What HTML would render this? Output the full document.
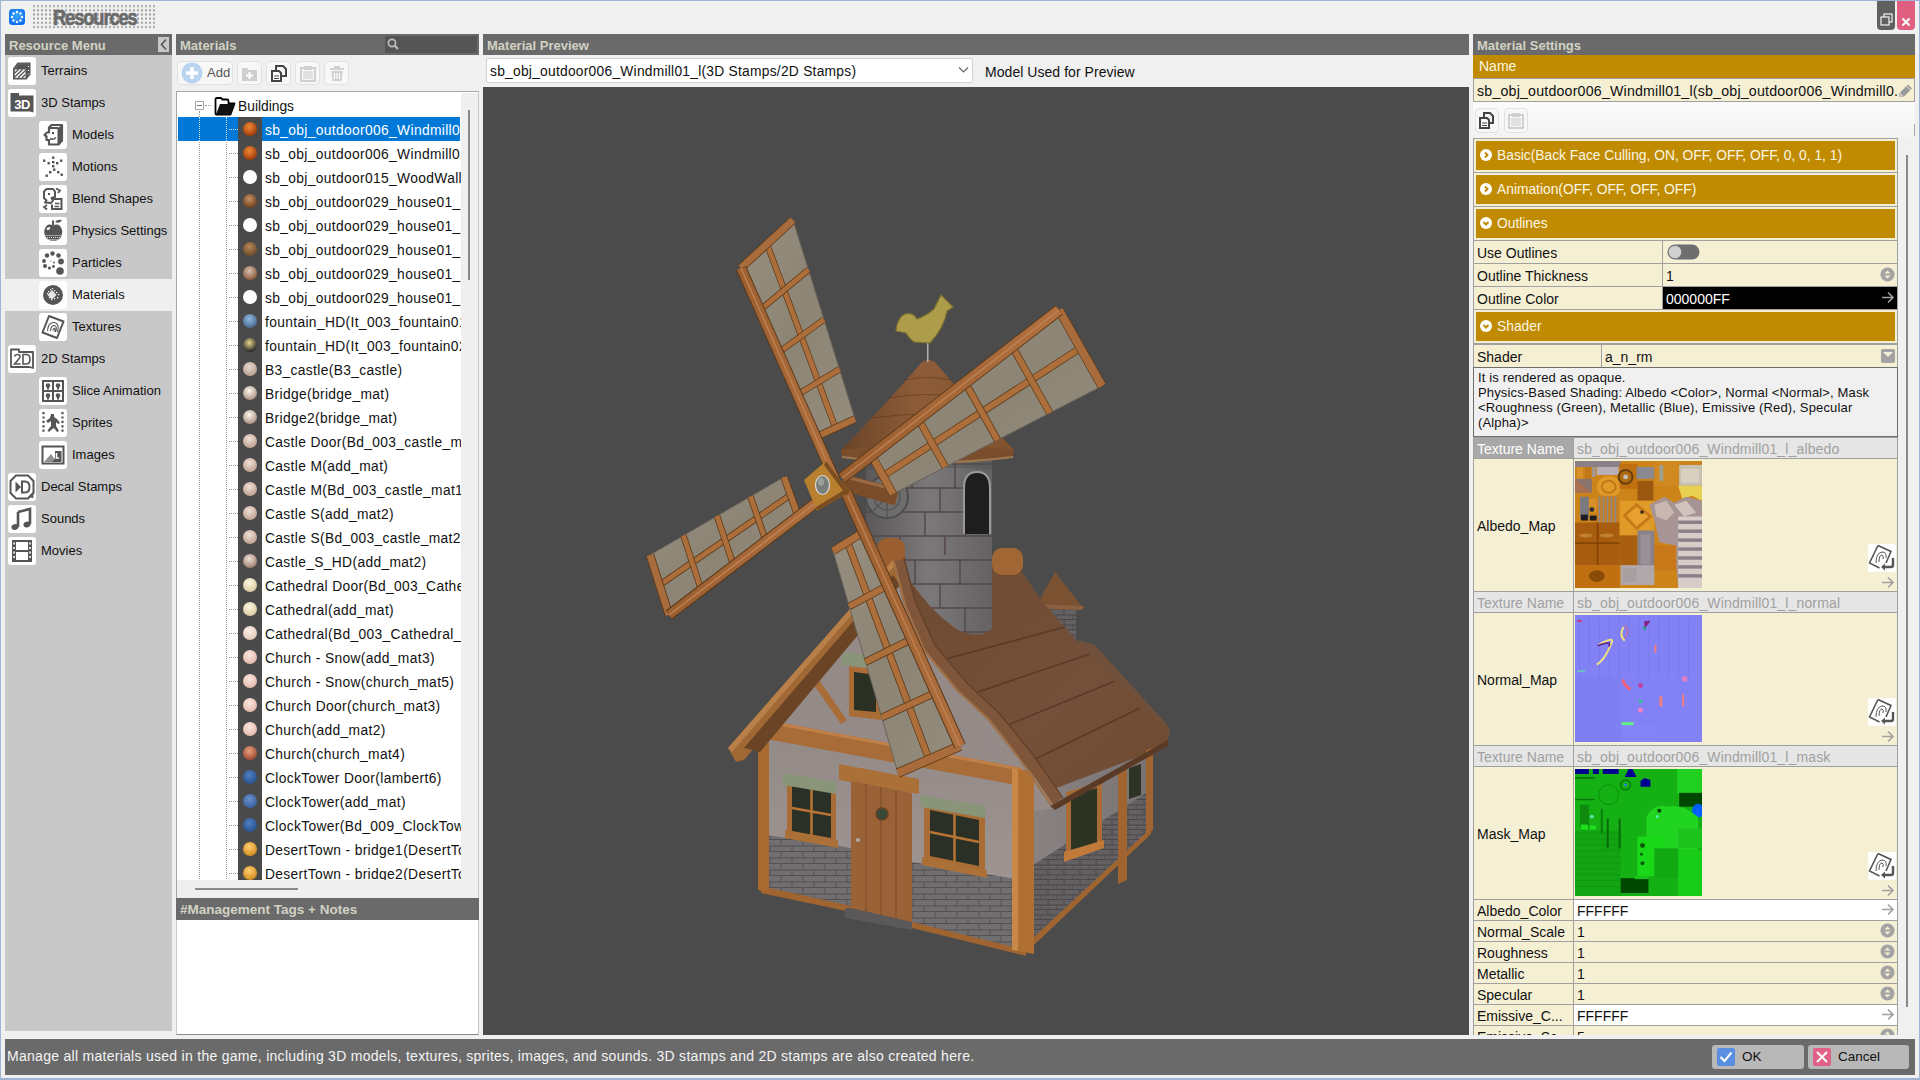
<!DOCTYPE html><html><head><meta charset="utf-8"><style>
*{box-sizing:border-box;margin:0;padding:0}
html,body{width:1920px;height:1080px;overflow:hidden;background:#f0f0f0;font-family:"Liberation Sans", sans-serif;font-size:13px;color:#000}
.a{position:absolute}
.hdr{position:absolute;background:#6a6a6a;color:#d2d2c4;font-weight:bold;font-size:13px;line-height:23px;padding-left:4px;white-space:nowrap}
.t{position:absolute;white-space:nowrap}
</style></head><body>
<div class="a" style="left:0;top:0;width:1920px;height:1080px;border:1px solid #9db4d4;border-width:1px 1px 2px 1px"></div>

<svg class="a" style="left:9px;top:9px" width="16" height="16" viewBox="0 0 16 16">
<defs><radialGradient id="ib" cx="50%" cy="40%" r="60%"><stop offset="0" stop-color="#3aa8ff"/><stop offset="1" stop-color="#0a6ef0"/></radialGradient></defs>
<rect x="0" y="0" width="16" height="16" rx="3.5" fill="url(#ib)"/>
<g fill="#fff"><circle cx="8" cy="3" r="1.2"/><circle cx="11.5" cy="4.5" r="1.2"/><circle cx="13" cy="8" r="1.2"/><circle cx="11.5" cy="11.5" r="1.2"/><circle cx="8" cy="13" r="1.2"/><circle cx="4.5" cy="11.5" r="1.2"/><circle cx="3" cy="8" r="1.2"/><circle cx="4.5" cy="4.5" r="1.2"/></g></svg>
<div class="a" style="left:32px;top:4px;width:125px;height:26px;background-image:radial-gradient(#9a9a9a 0.9px, transparent 1px);background-size:4px 4.2px;background-position:0 0"></div>
<div class="t" style="left:53px;top:3px;font-size:20px;font-weight:bold;color:#6a6a6a;letter-spacing:-1.2px;line-height:28px;transform:scale(0.915,1.08);transform-origin:0 50%;-webkit-text-stroke:0.6px #6a6a6a">Resources</div>
<div class="a" style="left:1877px;top:1px;width:18px;height:29px;background:#606060;border-radius:0 0 4px 4px"></div>
<svg class="a" style="left:1880px;top:13px" width="13" height="13" viewBox="0 0 13 13"><rect x="4" y="1" width="8" height="8" fill="none" stroke="#fff" stroke-width="1.1"/><rect x="1" y="4" width="8" height="8" fill="#606060" stroke="#fff" stroke-width="1.1"/></svg>
<div class="a" style="left:1897px;top:1px;width:18px;height:29px;background:#e05f80;border-radius:0 0 4px 4px"></div>
<svg class="a" style="left:1901px;top:17px" width="10" height="10" viewBox="0 0 10 10"><path d="M1.5 1.5L8.5 8.5M8.5 1.5L1.5 8.5" stroke="#fff" stroke-width="2"/></svg>

<div class="hdr" style="left:5px;top:34px;width:167px;height:21px">Resource Menu</div>
<div class="a" style="left:158px;top:37px;width:11px;height:15px;background:#c8c8c8"></div>
<svg class="a" style="left:158px;top:37px" width="11" height="15"><path d="M8 2.5L3.5 7.5L8 12.5" fill="none" stroke="#555" stroke-width="1.6"/></svg>
<div class="a" style="left:5px;top:55px;width:167px;height:976px;background:#c8c8c8"></div>
<div class="a" style="left:5px;top:279px;width:167px;height:32px;background:#efefef"></div>
<svg class="a" style="left:8px;top:57px" width="28" height="28" viewBox="0 0 28 28"><rect width="28" height="28" rx="3" fill="#fff"/><path d="M5 11.5L9.5 5.5H22.5V17.5L18.5 22.5H5Z" fill="#555"/><path d="M6.8 12.5H17.5V20.8H6.8Z" fill="#fff"/><path d="M6.8 16L10.5 12.5M6.8 20L14.5 12.5M10 20.8L17.5 13.5M14 20.8L17.5 17.5" stroke="#555" stroke-width="1.3"/><path d="M20 10L21 9M20 14L21 13M20 17.5L21 16.5" stroke="#fff" stroke-width="1"/><path d="M7 11.5L10.5 7H21" stroke="#777" stroke-width="0.8" fill="none"/></svg>
<div class="t" style="left:41px;top:62px;line-height:18px;color:#111">Terrains</div>
<svg class="a" style="left:8px;top:89px" width="28" height="28" viewBox="0 0 28 28"><rect width="28" height="28" rx="3" fill="#fff"/><path d="M2.5 4H11V6.5H25.5V23.5L22 22.5H2.5Z" fill="#555"/><text x="14" y="20" font-family="Liberation Sans" font-weight="bold" font-size="13" fill="#fff" text-anchor="middle" letter-spacing="-0.5">3D</text></svg>
<div class="t" style="left:41px;top:94px;line-height:18px;color:#111">3D Stamps</div>
<svg class="a" style="left:39px;top:121px" width="28" height="28" viewBox="0 0 28 28"><rect width="28" height="28" rx="3" fill="#fff"/><path d="M10 6.5L12.5 4H23V19.5L19.5 23.5H10V19H7.5V15.5L5.5 14L8 11.5H10Z" fill="none" stroke="#555" stroke-width="2.2" stroke-linejoin="round"/><path d="M19.5 7V23M10 7H19.5" stroke="#555" stroke-width="2"/><path d="M19.5 6.5L23 4V19.5L19.5 23.5Z" fill="#555"/><rect x="13" y="11" width="2" height="2.2" fill="#555"/><path d="M11 17.5Q14 19.5 17 16.5" fill="none" stroke="#555" stroke-width="1.6"/></svg>
<div class="t" style="left:72px;top:126px;line-height:18px;color:#111">Models</div>
<svg class="a" style="left:39px;top:153px" width="28" height="28" viewBox="0 0 28 28"><rect width="28" height="28" rx="3" fill="#fff"/><g fill="#555"><rect x="4" y="6.5" width="2.4" height="2.4"/><rect x="8.5" y="9" width="2.4" height="2.4"/><rect x="13" y="3.5" width="2.4" height="2.4"/><rect x="13" y="8" width="2.4" height="2.4"/><rect x="17" y="9" width="2.4" height="2.4"/><rect x="21" y="6.5" width="2.4" height="2.4"/><rect x="13" y="12" width="2.4" height="2.4"/><rect x="14" y="15.5" width="2.4" height="2.4"/><rect x="10" y="18" width="2.4" height="2.4"/><rect x="18" y="18" width="2.4" height="2.4"/><rect x="6.5" y="21.5" width="2.4" height="2.4"/><rect x="21.5" y="20.5" width="2.4" height="2.4"/></g></svg>
<div class="t" style="left:72px;top:158px;line-height:18px;color:#111">Motions</div>
<svg class="a" style="left:39px;top:185px" width="28" height="28" viewBox="0 0 28 28"><rect width="28" height="28" rx="3" fill="#fff"/><path d="M5 13V6.5L7.5 4H14L16 6.5V12L12.5 13L14 15.5L12 18L6 17.5L7.5 15.5Z" fill="none" stroke="#555" stroke-width="2" stroke-linejoin="round"/><path d="M14 14H22.5V24H13V19.5" fill="none" stroke="#555" stroke-width="2"/><rect x="9" y="8" width="2" height="2" fill="#555"/><path d="M16 18.5H20.5M15.5 21.5H20" stroke="#555" stroke-width="1.6"/><path d="M17 3.5L21 5.5L19 8M8 20L5 22L8 24.5" fill="none" stroke="#555" stroke-width="1.8"/></svg>
<div class="t" style="left:72px;top:190px;line-height:18px;color:#111">Blend Shapes</div>
<svg class="a" style="left:39px;top:217px" width="28" height="28" viewBox="0 0 28 28"><rect width="28" height="28" rx="3" fill="#fff"/><path d="M14 8.5Q18.5 6.5 21 9Q24.5 13 22.5 19Q20 24.5 14.5 23.5Q9 24.5 6 19Q4 13 7.5 9Q10 6.5 14 8.5Z" fill="#555"/><path d="M14 8.5V3.5" stroke="#555" stroke-width="2"/><path d="M16 5Q18 2 23 3Q21 7 16 5Z" fill="#555"/><ellipse cx="9.5" cy="11.5" rx="2" ry="1.2" fill="#fff" transform="rotate(-35 9.5 11.5)"/><path d="M5.5 18.5H23M6 20.5H22.5M7.5 22.5H21" stroke="#fff" stroke-width="0.9" stroke-dasharray="1 1"/></svg>
<div class="t" style="left:72px;top:222px;line-height:18px;color:#111">Physics Settings</div>
<svg class="a" style="left:39px;top:249px" width="28" height="28" viewBox="0 0 28 28"><rect width="28" height="28" rx="3" fill="#fff"/><g fill="#555"><circle cx="13.5" cy="4.5" r="2.2"/><circle cx="8" cy="6.5" r="2.2"/><circle cx="19.5" cy="6.5" r="2.3"/><circle cx="5" cy="12" r="1.9"/><circle cx="22" cy="12.5" r="2.9"/><circle cx="6" cy="17" r="2"/><circle cx="10.5" cy="19" r="1.6"/><circle cx="14.5" cy="17.5" r="1.4"/><circle cx="21" cy="22" r="3.8"/><circle cx="12" cy="12" r="0.6"/><circle cx="15" cy="13.5" r="0.9"/></g></svg>
<div class="t" style="left:72px;top:254px;line-height:18px;color:#111">Particles</div>
<svg class="a" style="left:39px;top:281px" width="28" height="28" viewBox="0 0 28 28"><rect width="28" height="28" rx="3" fill="#fff"/><circle cx="14" cy="14" r="10" fill="#555"/><g fill="#fff"><rect x="9" y="10" width="1.2" height="1.2"/><rect x="11" y="8" width="1.2" height="1.2"/><rect x="13" y="7" width="1.2" height="1.2"/><rect x="8" y="12" width="1.2" height="1.2"/><rect x="15" y="9" width="1.2" height="1.2"/><rect x="17" y="11" width="1.2" height="1.2"/><rect x="19" y="13" width="1.2" height="1.2"/><rect x="10" y="16" width="1.2" height="1.2"/><rect x="12" y="18" width="1.2" height="1.2"/><rect x="15" y="17" width="1.2" height="1.2"/><rect x="18" y="16" width="1.2" height="1.2"/></g><path d="M8.5 14L13 9L17.5 14L13 18.5Z" fill="#fff" opacity="0.85"/></svg>
<div class="t" style="left:72px;top:286px;line-height:18px;color:#111">Materials</div>
<svg class="a" style="left:39px;top:313px" width="28" height="28" viewBox="0 0 28 28"><rect width="28" height="28" rx="3" fill="#fff"/><path d="M10 3L24.5 8.5L18 25L3.5 19.5Z" fill="none" stroke="#555" stroke-width="2" stroke-linejoin="round"/><path d="M8.5 18Q9 9 15.5 9.5Q21 11 18.5 19M11.5 18Q12 12 15.5 12.5Q18.5 13.5 16.5 19M14 17.5Q14.5 15 15.5 15.5Q16.5 16 15.5 18.5" fill="none" stroke="#555" stroke-width="1.1"/></svg>
<div class="t" style="left:72px;top:318px;line-height:18px;color:#111">Textures</div>
<svg class="a" style="left:8px;top:345px" width="28" height="28" viewBox="0 0 28 28"><rect width="28" height="28" rx="3" fill="#fff"/><path d="M3 4.5H11V7H25V23L21.5 22H3Z" fill="none" stroke="#555" stroke-width="1.8" stroke-linejoin="round"/><path d="M6.5 11.5Q7 9.5 9.5 9.5Q12 9.5 12 11.5Q12 13 6.5 19H12.5M15 9.5H18Q22 9.5 22 14.5Q22 19 18 19H15Z" fill="none" stroke="#555" stroke-width="1.6"/></svg>
<div class="t" style="left:41px;top:350px;line-height:18px;color:#111">2D Stamps</div>
<svg class="a" style="left:39px;top:377px" width="28" height="28" viewBox="0 0 28 28"><rect width="28" height="28" rx="3" fill="#fff"/><rect x="4" y="4" width="20" height="20" fill="none" stroke="#555" stroke-width="2"/><path d="M14 4V24M4 14H24" stroke="#555" stroke-width="2"/><g fill="#555"><circle cx="9" cy="8.5" r="2.3"/><circle cx="19" cy="8.5" r="2.3"/><circle cx="9" cy="18.5" r="2.3"/><circle cx="19" cy="18.5" r="2.3"/><rect x="8" y="10" width="2" height="2.5"/><rect x="18" y="10" width="2" height="2.5"/><rect x="8" y="20" width="2" height="2.5"/><rect x="18" y="20" width="2" height="2.5"/></g></svg>
<div class="t" style="left:72px;top:382px;line-height:18px;color:#111">Slice Animation</div>
<svg class="a" style="left:39px;top:409px" width="28" height="28" viewBox="0 0 28 28"><rect width="28" height="28" rx="3" fill="#fff"/><path d="M4.5 3V25M23.5 3V25" stroke="#555" stroke-width="2.2" stroke-dasharray="2.2 2.2"/><path d="M12 5H15V8L18 10L21 14L19 15L17 13V17L20 22L18 23L15 19L12 21L10 23L8.5 21.5L12 17V12L9 14L7 12L11 9Z" fill="#555"/></svg>
<div class="t" style="left:72px;top:414px;line-height:18px;color:#111">Sprites</div>
<svg class="a" style="left:39px;top:441px" width="28" height="28" viewBox="0 0 28 28"><rect width="28" height="28" rx="3" fill="#fff"/><rect x="3.5" y="5.5" width="21" height="17" fill="none" stroke="#555" stroke-width="2"/><path d="M5 21L12 13L18 21Z" fill="#555" opacity="0.65"/><path d="M16 10H22.5V21H13L16 18Z" fill="#555"/><path d="M17.5 12V17H20" stroke="#fff" stroke-width="1.5" fill="none"/></svg>
<div class="t" style="left:72px;top:446px;line-height:18px;color:#111">Images</div>
<svg class="a" style="left:8px;top:473px" width="28" height="28" viewBox="0 0 28 28"><rect width="28" height="28" rx="3" fill="#fff"/><path d="M8 2.5H20L25.5 8V20L20 25.5H8L2.5 20V8Z" fill="none" stroke="#555" stroke-width="2"/><path d="M7.5 8.5L13 14L7.5 19.5Z" fill="#555"/><path d="M14 8.5H17Q21.5 8.5 21.5 14Q21.5 19.5 17 19.5H14Z" fill="none" stroke="#555" stroke-width="2"/><path d="M20 24L25 19L25.5 25Z" fill="#555"/></svg>
<div class="t" style="left:41px;top:478px;line-height:18px;color:#111">Decal Stamps</div>
<svg class="a" style="left:8px;top:505px" width="28" height="28" viewBox="0 0 28 28"><rect width="28" height="28" rx="3" fill="#fff"/><path d="M10 7L22 4V19" fill="none" stroke="#555" stroke-width="2.6"/><path d="M10 7V22" stroke="#555" stroke-width="2.6"/><ellipse cx="7" cy="22" rx="3.6" ry="2.8" fill="#555" transform="rotate(-20 7 22)"/><ellipse cx="19" cy="19.5" rx="3.6" ry="2.8" fill="#555" transform="rotate(-20 19 19.5)"/></svg>
<div class="t" style="left:41px;top:510px;line-height:18px;color:#111">Sounds</div>
<svg class="a" style="left:8px;top:537px" width="28" height="28" viewBox="0 0 28 28"><rect width="28" height="28" rx="3" fill="#fff"/><rect x="4" y="3" width="4" height="22" fill="#555"/><rect x="20" y="3" width="4" height="22" fill="#555"/><rect x="8" y="3" width="12" height="2" fill="#555"/><rect x="8" y="13" width="12" height="2" fill="#555"/><rect x="8" y="23" width="12" height="2" fill="#555"/><g fill="#fff"><rect x="5.2" y="5.5" width="1.6" height="2"/><rect x="5.2" y="10" width="1.6" height="2"/><rect x="5.2" y="14.5" width="1.6" height="2"/><rect x="5.2" y="19" width="1.6" height="2"/><rect x="21.2" y="5.5" width="1.6" height="2"/><rect x="21.2" y="10" width="1.6" height="2"/><rect x="21.2" y="14.5" width="1.6" height="2"/><rect x="21.2" y="19" width="1.6" height="2"/></g></svg>
<div class="t" style="left:41px;top:542px;line-height:18px;color:#111">Movies</div>
<div class="hdr" style="left:176px;top:34px;width:303px;height:21px">Materials</div>
<div class="a" style="left:385px;top:36px;width:92px;height:17px;background:#555"></div>
<svg class="a" style="left:386px;top:37px" width="14" height="14"><circle cx="6" cy="6" r="3.6" fill="none" stroke="#bbb" stroke-width="1.8"/><path d="M8.5 8.5L12 12" stroke="#bbb" stroke-width="2.2"/></svg>
<div class="a" style="left:177px;top:61px;width:56px;height:24px;background:#f7f7f7;border:1px solid #e2e2e2;border-radius:4px"></div>
<svg class="a" style="left:181px;top:62px" width="22" height="22"><circle cx="11" cy="11" r="10.5" fill="#b9d3f0"/><path d="M11 5V17M5 11H17" stroke="#fff" stroke-width="3.6"/></svg>
<div class="t" style="left:207px;top:64px;line-height:18px;color:#555;font-size:13px">Add</div>
<div class="a" style="left:237px;top:61px;width:25px;height:24px;background:#f7f7f7;border:1px solid #e2e2e2;border-radius:4px"></div>
<div class="a" style="left:266px;top:61px;width:25px;height:24px;background:#f7f7f7;border:1px solid #e2e2e2;border-radius:4px"></div>
<div class="a" style="left:295px;top:61px;width:25px;height:24px;background:#f7f7f7;border:1px solid #e2e2e2;border-radius:4px"></div>
<div class="a" style="left:324px;top:61px;width:25px;height:24px;background:#f7f7f7;border:1px solid #e2e2e2;border-radius:4px"></div>
<svg class="a" style="left:238px;top:62px" width="24" height="22"><path d="M4 6H9L11 8H19V19H4Z" fill="#cfcfcf"/><path d="M11.5 10V17M8 13.5H15" stroke="#fff" stroke-width="2"/></svg>
<svg class="a" style="left:267px;top:62px" width="24" height="22"><path d="M9 4H16L19 7V14H9Z" fill="none" stroke="#444" stroke-width="2"/><path d="M5 9H12L14 11V19H5Z" fill="#fff" stroke="#444" stroke-width="2"/><path d="M7 14H12M7 16.5H12" stroke="#444" stroke-width="1.2"/></svg>
<svg class="a" style="left:296px;top:62px" width="24" height="22"><rect x="5" y="6" width="14" height="13" fill="none" stroke="#d0d0d0" stroke-width="2"/><rect x="8" y="4" width="8" height="4" fill="#d0d0d0"/><rect x="7" y="9" width="10" height="8" fill="#e0e0e0"/></svg>
<svg class="a" style="left:325px;top:62px" width="24" height="22"><path d="M5 7H19M10 7V5H14V7" stroke="#d0d0d0" stroke-width="2" fill="none"/><path d="M6.5 9H17.5L16.5 19H7.5Z" fill="#d0d0d0"/><path d="M9.5 11V17M12 11V17M14.5 11V17" stroke="#fff" stroke-width="1.2"/></svg>
<div class="a" style="left:176px;top:91px;width:303px;height:807px;background:#fff;border:1px solid #a6a6a6;border-bottom:none;border-right-color:#c8c8c8"></div>
<div class="a" style="left:461px;top:93px;width:17px;height:787px;background:#efefef"></div>
<div class="a" style="left:468px;top:110px;width:2px;height:170px;background:#8a8a8a"></div>
<div class="a" style="left:177px;top:880px;width:301px;height:18px;background:#efefef"></div>
<div class="a" style="left:195px;top:888px;width:103px;height:2px;background:#8a8a8a"></div>
<div class="a" style="left:177px;top:92px;width:284px;height:788px;overflow:hidden">
<div class="a" style="left:18px;top:9px;width:9px;height:9px;border:1px solid #a8a8a8;background:#fff"></div>
<div class="a" style="left:20px;top:13px;width:5px;height:1px;background:#777"></div>
<div class="a" style="left:28px;top:13px;width:6px;height:1px;border-top:1px dotted #999"></div>
<div class="a" style="left:22px;top:19px;width:1px;height:780px;border-left:1px dotted #999"></div>
<div class="a" style="left:49px;top:25px;width:1px;height:780px;border-left:1px dotted #999"></div>
<svg class="a" style="left:37px;top:5px" width="22" height="19" viewBox="0 0 22 19"><path d="M1.5 2.5Q1.5 1 3 1H7L8.5 2.5H13Q14.5 2.5 14.5 4V6.5H20.5L16.5 17.5H2.5Q1.5 17.5 1.5 16.5Z" fill="#fff" stroke="#000" stroke-width="1.8" stroke-linejoin="round"/><path d="M6 7H21L17 17.5H2Z" fill="#111"/></svg>
<div class="t" style="left:61px;top:6px;line-height:18px;font-size:13.8px;color:#111">Buildings</div>
<div class="a" style="left:1px;top:25px;width:282px;height:24px;background:#0078d7"></div>
<div class="a" style="left:61px;top:25px;width:24px;height:800px;background:#4a4a4a"></div>
<div class="a" style="left:22px;top:25px;width:1px;height:24px;border-left:1px dotted #d8e8f8"></div>
<div class="a" style="left:49px;top:25px;width:1px;height:24px;border-left:1px dotted #d8e8f8"></div>
<svg class="a" style="left:0;top:0" width="1" height="1"><defs><radialGradient id="sp0" cx="45%" cy="35%" r="65%"><stop offset="0" stop-color="#f08a3a"/><stop offset="1" stop-color="#a03a08"/></radialGradient><radialGradient id="sp1" cx="45%" cy="35%" r="65%"><stop offset="0" stop-color="#f08a3a"/><stop offset="1" stop-color="#a03a08"/></radialGradient><radialGradient id="sp2" cx="45%" cy="35%" r="65%"><stop offset="0" stop-color="#fff"/><stop offset="1" stop-color="#fff"/></radialGradient><radialGradient id="sp3" cx="45%" cy="35%" r="65%"><stop offset="0" stop-color="#c89060"/><stop offset="1" stop-color="#6a4020"/></radialGradient><radialGradient id="sp4" cx="45%" cy="35%" r="65%"><stop offset="0" stop-color="#fff"/><stop offset="1" stop-color="#fff"/></radialGradient><radialGradient id="sp5" cx="45%" cy="35%" r="65%"><stop offset="0" stop-color="#b88858"/><stop offset="1" stop-color="#6a4a2a"/></radialGradient><radialGradient id="sp6" cx="45%" cy="35%" r="65%"><stop offset="0" stop-color="#d8c0b0"/><stop offset="1" stop-color="#8a5a3a"/></radialGradient><radialGradient id="sp7" cx="45%" cy="35%" r="65%"><stop offset="0" stop-color="#fff"/><stop offset="1" stop-color="#fff"/></radialGradient><radialGradient id="sp8" cx="45%" cy="35%" r="65%"><stop offset="0" stop-color="#90b8e0"/><stop offset="1" stop-color="#4a6a90"/></radialGradient><radialGradient id="sp9" cx="45%" cy="35%" r="65%"><stop offset="0" stop-color="#e8d890"/><stop offset="1" stop-color="#202020"/></radialGradient><radialGradient id="sp10" cx="45%" cy="35%" r="65%"><stop offset="0" stop-color="#e8d8d0"/><stop offset="1" stop-color="#b8a090"/></radialGradient><radialGradient id="sp11" cx="45%" cy="35%" r="65%"><stop offset="0" stop-color="#fff8f0"/><stop offset="1" stop-color="#a89080"/></radialGradient><radialGradient id="sp12" cx="45%" cy="35%" r="65%"><stop offset="0" stop-color="#fff8f0"/><stop offset="1" stop-color="#a89080"/></radialGradient><radialGradient id="sp13" cx="45%" cy="35%" r="65%"><stop offset="0" stop-color="#f0e0d8"/><stop offset="1" stop-color="#c0a090"/></radialGradient><radialGradient id="sp14" cx="45%" cy="35%" r="65%"><stop offset="0" stop-color="#f0e0d8"/><stop offset="1" stop-color="#c0a090"/></radialGradient><radialGradient id="sp15" cx="45%" cy="35%" r="65%"><stop offset="0" stop-color="#f0e0d8"/><stop offset="1" stop-color="#c0a090"/></radialGradient><radialGradient id="sp16" cx="45%" cy="35%" r="65%"><stop offset="0" stop-color="#f0e0d8"/><stop offset="1" stop-color="#c0a090"/></radialGradient><radialGradient id="sp17" cx="45%" cy="35%" r="65%"><stop offset="0" stop-color="#f0e0d8"/><stop offset="1" stop-color="#c0a090"/></radialGradient><radialGradient id="sp18" cx="45%" cy="35%" r="65%"><stop offset="0" stop-color="#f0e0d8"/><stop offset="1" stop-color="#a08070"/></radialGradient><radialGradient id="sp19" cx="45%" cy="35%" r="65%"><stop offset="0" stop-color="#fff8e0"/><stop offset="1" stop-color="#d8c8a0"/></radialGradient><radialGradient id="sp20" cx="45%" cy="35%" r="65%"><stop offset="0" stop-color="#fff8e0"/><stop offset="1" stop-color="#d8c8a0"/></radialGradient><radialGradient id="sp21" cx="45%" cy="35%" r="65%"><stop offset="0" stop-color="#fff0e8"/><stop offset="1" stop-color="#e0c8b8"/></radialGradient><radialGradient id="sp22" cx="45%" cy="35%" r="65%"><stop offset="0" stop-color="#fde8e0"/><stop offset="1" stop-color="#e0b8a8"/></radialGradient><radialGradient id="sp23" cx="45%" cy="35%" r="65%"><stop offset="0" stop-color="#fde8e0"/><stop offset="1" stop-color="#e0b8a8"/></radialGradient><radialGradient id="sp24" cx="45%" cy="35%" r="65%"><stop offset="0" stop-color="#fde8e0"/><stop offset="1" stop-color="#e0b8a8"/></radialGradient><radialGradient id="sp25" cx="45%" cy="35%" r="65%"><stop offset="0" stop-color="#fde8e0"/><stop offset="1" stop-color="#e0b8a8"/></radialGradient><radialGradient id="sp26" cx="45%" cy="35%" r="65%"><stop offset="0" stop-color="#e8a080"/><stop offset="1" stop-color="#a04830"/></radialGradient><radialGradient id="sp27" cx="45%" cy="35%" r="65%"><stop offset="0" stop-color="#5080c0"/><stop offset="1" stop-color="#2a5090"/></radialGradient><radialGradient id="sp28" cx="45%" cy="35%" r="65%"><stop offset="0" stop-color="#6a90c8"/><stop offset="1" stop-color="#3a60a0"/></radialGradient><radialGradient id="sp29" cx="45%" cy="35%" r="65%"><stop offset="0" stop-color="#5080c0"/><stop offset="1" stop-color="#2a5090"/></radialGradient><radialGradient id="sp30" cx="45%" cy="35%" r="65%"><stop offset="0" stop-color="#ffd070"/><stop offset="1" stop-color="#d08a20"/></radialGradient><radialGradient id="sp31" cx="45%" cy="35%" r="65%"><stop offset="0" stop-color="#ffd070"/><stop offset="1" stop-color="#d08a20"/></radialGradient></defs></svg>
<div class="a" style="left:52px;top:37px;width:9px;height:1px;border-top:1px dotted #d8e8f8"></div>
<svg class="a" style="left:66px;top:30px" width="14" height="14"><circle cx="7" cy="7" r="7" fill="url(#sp0)"/></svg>
<div class="t" style="left:88px;top:30px;line-height:18px;font-size:13.8px;letter-spacing:0.35px;color:#fff">sb_obj_outdoor006_Windmill01_l</div>
<div class="a" style="left:52px;top:61px;width:9px;height:1px;border-top:1px dotted #999"></div>
<svg class="a" style="left:66px;top:54px" width="14" height="14"><circle cx="7" cy="7" r="7" fill="url(#sp1)"/></svg>
<div class="t" style="left:88px;top:54px;line-height:18px;font-size:13.8px;letter-spacing:0.35px;color:#111">sb_obj_outdoor006_Windmill01_l</div>
<div class="a" style="left:52px;top:85px;width:9px;height:1px;border-top:1px dotted #999"></div>
<svg class="a" style="left:66px;top:78px" width="14" height="14"><circle cx="7" cy="7" r="7" fill="url(#sp2)"/></svg>
<div class="t" style="left:88px;top:78px;line-height:18px;font-size:13.8px;letter-spacing:0.35px;color:#111">sb_obj_outdoor015_WoodWall01</div>
<div class="a" style="left:52px;top:109px;width:9px;height:1px;border-top:1px dotted #999"></div>
<svg class="a" style="left:66px;top:102px" width="14" height="14"><circle cx="7" cy="7" r="7" fill="url(#sp3)"/></svg>
<div class="t" style="left:88px;top:102px;line-height:18px;font-size:13.8px;letter-spacing:0.35px;color:#111">sb_obj_outdoor029_house01_l</div>
<div class="a" style="left:52px;top:133px;width:9px;height:1px;border-top:1px dotted #999"></div>
<svg class="a" style="left:66px;top:126px" width="14" height="14"><circle cx="7" cy="7" r="7" fill="url(#sp4)"/></svg>
<div class="t" style="left:88px;top:126px;line-height:18px;font-size:13.8px;letter-spacing:0.35px;color:#111">sb_obj_outdoor029_house01_l</div>
<div class="a" style="left:52px;top:157px;width:9px;height:1px;border-top:1px dotted #999"></div>
<svg class="a" style="left:66px;top:150px" width="14" height="14"><circle cx="7" cy="7" r="7" fill="url(#sp5)"/></svg>
<div class="t" style="left:88px;top:150px;line-height:18px;font-size:13.8px;letter-spacing:0.35px;color:#111">sb_obj_outdoor029_house01_l</div>
<div class="a" style="left:52px;top:181px;width:9px;height:1px;border-top:1px dotted #999"></div>
<svg class="a" style="left:66px;top:174px" width="14" height="14"><circle cx="7" cy="7" r="7" fill="url(#sp6)"/></svg>
<div class="t" style="left:88px;top:174px;line-height:18px;font-size:13.8px;letter-spacing:0.35px;color:#111">sb_obj_outdoor029_house01_l</div>
<div class="a" style="left:52px;top:205px;width:9px;height:1px;border-top:1px dotted #999"></div>
<svg class="a" style="left:66px;top:198px" width="14" height="14"><circle cx="7" cy="7" r="7" fill="url(#sp7)"/></svg>
<div class="t" style="left:88px;top:198px;line-height:18px;font-size:13.8px;letter-spacing:0.35px;color:#111">sb_obj_outdoor029_house01_l</div>
<div class="a" style="left:52px;top:229px;width:9px;height:1px;border-top:1px dotted #999"></div>
<svg class="a" style="left:66px;top:222px" width="14" height="14"><circle cx="7" cy="7" r="7" fill="url(#sp8)"/></svg>
<div class="t" style="left:88px;top:222px;line-height:18px;font-size:13.8px;letter-spacing:0.35px;color:#111">fountain_HD(It_003_fountain01)</div>
<div class="a" style="left:52px;top:253px;width:9px;height:1px;border-top:1px dotted #999"></div>
<svg class="a" style="left:66px;top:246px" width="14" height="14"><circle cx="7" cy="7" r="7" fill="url(#sp9)"/></svg>
<div class="t" style="left:88px;top:246px;line-height:18px;font-size:13.8px;letter-spacing:0.35px;color:#111">fountain_HD(It_003_fountain02)</div>
<div class="a" style="left:52px;top:277px;width:9px;height:1px;border-top:1px dotted #999"></div>
<svg class="a" style="left:66px;top:270px" width="14" height="14"><circle cx="7" cy="7" r="7" fill="url(#sp10)"/></svg>
<div class="t" style="left:88px;top:270px;line-height:18px;font-size:13.8px;letter-spacing:0.35px;color:#111">B3_castle(B3_castle)</div>
<div class="a" style="left:52px;top:301px;width:9px;height:1px;border-top:1px dotted #999"></div>
<svg class="a" style="left:66px;top:294px" width="14" height="14"><circle cx="7" cy="7" r="7" fill="url(#sp11)"/></svg>
<div class="t" style="left:88px;top:294px;line-height:18px;font-size:13.8px;letter-spacing:0.35px;color:#111">Bridge(bridge_mat)</div>
<div class="a" style="left:52px;top:325px;width:9px;height:1px;border-top:1px dotted #999"></div>
<svg class="a" style="left:66px;top:318px" width="14" height="14"><circle cx="7" cy="7" r="7" fill="url(#sp12)"/></svg>
<div class="t" style="left:88px;top:318px;line-height:18px;font-size:13.8px;letter-spacing:0.35px;color:#111">Bridge2(bridge_mat)</div>
<div class="a" style="left:52px;top:349px;width:9px;height:1px;border-top:1px dotted #999"></div>
<svg class="a" style="left:66px;top:342px" width="14" height="14"><circle cx="7" cy="7" r="7" fill="url(#sp13)"/></svg>
<div class="t" style="left:88px;top:342px;line-height:18px;font-size:13.8px;letter-spacing:0.35px;color:#111">Castle Door(Bd_003_castle_mat)</div>
<div class="a" style="left:52px;top:373px;width:9px;height:1px;border-top:1px dotted #999"></div>
<svg class="a" style="left:66px;top:366px" width="14" height="14"><circle cx="7" cy="7" r="7" fill="url(#sp14)"/></svg>
<div class="t" style="left:88px;top:366px;line-height:18px;font-size:13.8px;letter-spacing:0.35px;color:#111">Castle M(add_mat)</div>
<div class="a" style="left:52px;top:397px;width:9px;height:1px;border-top:1px dotted #999"></div>
<svg class="a" style="left:66px;top:390px" width="14" height="14"><circle cx="7" cy="7" r="7" fill="url(#sp15)"/></svg>
<div class="t" style="left:88px;top:390px;line-height:18px;font-size:13.8px;letter-spacing:0.35px;color:#111">Castle M(Bd_003_castle_mat1)</div>
<div class="a" style="left:52px;top:421px;width:9px;height:1px;border-top:1px dotted #999"></div>
<svg class="a" style="left:66px;top:414px" width="14" height="14"><circle cx="7" cy="7" r="7" fill="url(#sp16)"/></svg>
<div class="t" style="left:88px;top:414px;line-height:18px;font-size:13.8px;letter-spacing:0.35px;color:#111">Castle S(add_mat2)</div>
<div class="a" style="left:52px;top:445px;width:9px;height:1px;border-top:1px dotted #999"></div>
<svg class="a" style="left:66px;top:438px" width="14" height="14"><circle cx="7" cy="7" r="7" fill="url(#sp17)"/></svg>
<div class="t" style="left:88px;top:438px;line-height:18px;font-size:13.8px;letter-spacing:0.35px;color:#111">Castle S(Bd_003_castle_mat2)</div>
<div class="a" style="left:52px;top:469px;width:9px;height:1px;border-top:1px dotted #999"></div>
<svg class="a" style="left:66px;top:462px" width="14" height="14"><circle cx="7" cy="7" r="7" fill="url(#sp18)"/></svg>
<div class="t" style="left:88px;top:462px;line-height:18px;font-size:13.8px;letter-spacing:0.35px;color:#111">Castle_S_HD(add_mat2)</div>
<div class="a" style="left:52px;top:493px;width:9px;height:1px;border-top:1px dotted #999"></div>
<svg class="a" style="left:66px;top:486px" width="14" height="14"><circle cx="7" cy="7" r="7" fill="url(#sp19)"/></svg>
<div class="t" style="left:88px;top:486px;line-height:18px;font-size:13.8px;letter-spacing:0.35px;color:#111">Cathedral Door(Bd_003_Cathedral)</div>
<div class="a" style="left:52px;top:517px;width:9px;height:1px;border-top:1px dotted #999"></div>
<svg class="a" style="left:66px;top:510px" width="14" height="14"><circle cx="7" cy="7" r="7" fill="url(#sp20)"/></svg>
<div class="t" style="left:88px;top:510px;line-height:18px;font-size:13.8px;letter-spacing:0.35px;color:#111">Cathedral(add_mat)</div>
<div class="a" style="left:52px;top:541px;width:9px;height:1px;border-top:1px dotted #999"></div>
<svg class="a" style="left:66px;top:534px" width="14" height="14"><circle cx="7" cy="7" r="7" fill="url(#sp21)"/></svg>
<div class="t" style="left:88px;top:534px;line-height:18px;font-size:13.8px;letter-spacing:0.35px;color:#111">Cathedral(Bd_003_Cathedral_mat)</div>
<div class="a" style="left:52px;top:565px;width:9px;height:1px;border-top:1px dotted #999"></div>
<svg class="a" style="left:66px;top:558px" width="14" height="14"><circle cx="7" cy="7" r="7" fill="url(#sp22)"/></svg>
<div class="t" style="left:88px;top:558px;line-height:18px;font-size:13.8px;letter-spacing:0.35px;color:#111">Church - Snow(add_mat3)</div>
<div class="a" style="left:52px;top:589px;width:9px;height:1px;border-top:1px dotted #999"></div>
<svg class="a" style="left:66px;top:582px" width="14" height="14"><circle cx="7" cy="7" r="7" fill="url(#sp23)"/></svg>
<div class="t" style="left:88px;top:582px;line-height:18px;font-size:13.8px;letter-spacing:0.35px;color:#111">Church - Snow(church_mat5)</div>
<div class="a" style="left:52px;top:613px;width:9px;height:1px;border-top:1px dotted #999"></div>
<svg class="a" style="left:66px;top:606px" width="14" height="14"><circle cx="7" cy="7" r="7" fill="url(#sp24)"/></svg>
<div class="t" style="left:88px;top:606px;line-height:18px;font-size:13.8px;letter-spacing:0.35px;color:#111">Church Door(church_mat3)</div>
<div class="a" style="left:52px;top:637px;width:9px;height:1px;border-top:1px dotted #999"></div>
<svg class="a" style="left:66px;top:630px" width="14" height="14"><circle cx="7" cy="7" r="7" fill="url(#sp25)"/></svg>
<div class="t" style="left:88px;top:630px;line-height:18px;font-size:13.8px;letter-spacing:0.35px;color:#111">Church(add_mat2)</div>
<div class="a" style="left:52px;top:661px;width:9px;height:1px;border-top:1px dotted #999"></div>
<svg class="a" style="left:66px;top:654px" width="14" height="14"><circle cx="7" cy="7" r="7" fill="url(#sp26)"/></svg>
<div class="t" style="left:88px;top:654px;line-height:18px;font-size:13.8px;letter-spacing:0.35px;color:#111">Church(church_mat4)</div>
<div class="a" style="left:52px;top:685px;width:9px;height:1px;border-top:1px dotted #999"></div>
<svg class="a" style="left:66px;top:678px" width="14" height="14"><circle cx="7" cy="7" r="7" fill="url(#sp27)"/></svg>
<div class="t" style="left:88px;top:678px;line-height:18px;font-size:13.8px;letter-spacing:0.35px;color:#111">ClockTower Door(lambert6)</div>
<div class="a" style="left:52px;top:709px;width:9px;height:1px;border-top:1px dotted #999"></div>
<svg class="a" style="left:66px;top:702px" width="14" height="14"><circle cx="7" cy="7" r="7" fill="url(#sp28)"/></svg>
<div class="t" style="left:88px;top:702px;line-height:18px;font-size:13.8px;letter-spacing:0.35px;color:#111">ClockTower(add_mat)</div>
<div class="a" style="left:52px;top:733px;width:9px;height:1px;border-top:1px dotted #999"></div>
<svg class="a" style="left:66px;top:726px" width="14" height="14"><circle cx="7" cy="7" r="7" fill="url(#sp29)"/></svg>
<div class="t" style="left:88px;top:726px;line-height:18px;font-size:13.8px;letter-spacing:0.35px;color:#111">ClockTower(Bd_009_ClockTower)</div>
<div class="a" style="left:52px;top:757px;width:9px;height:1px;border-top:1px dotted #999"></div>
<svg class="a" style="left:66px;top:750px" width="14" height="14"><circle cx="7" cy="7" r="7" fill="url(#sp30)"/></svg>
<div class="t" style="left:88px;top:750px;line-height:18px;font-size:13.8px;letter-spacing:0.35px;color:#111">DesertTown - bridge1(DesertTown)</div>
<div class="a" style="left:52px;top:781px;width:9px;height:1px;border-top:1px dotted #999"></div>
<svg class="a" style="left:66px;top:774px" width="14" height="14"><circle cx="7" cy="7" r="7" fill="url(#sp31)"/></svg>
<div class="t" style="left:88px;top:774px;line-height:18px;font-size:13.8px;letter-spacing:0.35px;color:#111">DesertTown - bridge2(DesertTown)</div>
</div>
<div class="a" style="left:177px;top:893px;width:0;height:0"></div>
<div class="hdr" style="left:176px;top:898px;width:303px;height:22px;line-height:23px;font-size:13.5px">#Management Tags + Notes</div>
<div class="a" style="left:176px;top:920px;width:303px;height:115px;background:#fff;border:1px solid #c8c8c8;border-top:none;border-bottom-color:#8a8a8a"></div>
<div class="hdr" style="left:483px;top:34px;width:986px;height:21px">Material Preview</div>
<div class="a" style="left:486px;top:58px;width:487px;height:25px;background:#fff;border:1px solid #d0d0d0;border-radius:2px"></div>
<div class="t" style="left:490px;top:63px;line-height:18px;font-size:13.8px;letter-spacing:0.25px;color:#111">sb_obj_outdoor006_Windmill01_l(3D Stamps/2D Stamps)</div>
<svg class="a" style="left:958px;top:66px" width="11" height="8"><path d="M1 1.5L5.5 6L10 1.5" fill="none" stroke="#666" stroke-width="1.2"/></svg>
<div class="t" style="left:985px;top:63px;line-height:18px;font-size:14px;letter-spacing:0.05px;color:#111">Model Used for Preview</div>
<div class="a" style="left:483px;top:87px;width:986px;height:948px;background:#4b4b4b"></div>
<svg class="a" style="left:0;top:0" width="1920" height="1080" viewBox="0 0 1920 1080"><defs>
<linearGradient id="cloth" x1="0" y1="0" x2="1" y2="1"><stop offset="0" stop-color="#968e7e"/><stop offset="0.5" stop-color="#8c8474"/><stop offset="1" stop-color="#948c7c"/></linearGradient>
<linearGradient id="wood" x1="0" y1="0" x2="1" y2="0"><stop offset="0" stop-color="#9a5e30"/><stop offset="1" stop-color="#b07040"/></linearGradient>
<linearGradient id="roofg" x1="0" y1="0" x2="1" y2="1"><stop offset="0" stop-color="#6e4a30"/><stop offset="0.6" stop-color="#74503a"/><stop offset="1" stop-color="#6e4a30"/></linearGradient>
<linearGradient id="coneg" x1="0" y1="0" x2="1" y2="0"><stop offset="0" stop-color="#6a4428"/><stop offset="0.45" stop-color="#8e5c38"/><stop offset="1" stop-color="#80522e"/></linearGradient>
<linearGradient id="towerg" x1="0" y1="0" x2="1" y2="0"><stop offset="0" stop-color="#5a5858"/><stop offset="0.5" stop-color="#7a7878"/><stop offset="1" stop-color="#646262"/></linearGradient>
<linearGradient id="plaster" x1="0" y1="0" x2="0" y2="1"><stop offset="0" stop-color="#948a88"/><stop offset="1" stop-color="#a29896"/></linearGradient>
<linearGradient id="sidew" x1="0" y1="0" x2="1" y2="0"><stop offset="0" stop-color="#8a8282"/><stop offset="1" stop-color="#787272"/></linearGradient>
<pattern id="brick" width="22" height="12" patternUnits="userSpaceOnUse"><rect width="22" height="12" fill="#706e70"/><path d="M0 11.5H22M11 0V6M0 6H22M0 6V12M22 6V12" stroke="#545052" stroke-width="1"/></pattern>
<pattern id="brickS" width="16" height="10" patternUnits="userSpaceOnUse"><rect width="16" height="10" fill="#626062"/><path d="M0 9.5H16M8 0V5M0 5H16M0 5V10" stroke="#4a4648" stroke-width="1"/></pattern>
<pattern id="towerbrick" width="40" height="25" patternUnits="userSpaceOnUse"><rect width="40" height="25" fill="url(#towerg)"/><path d="M0 24.5H40M20 0V12.5M0 12.5H40M5 12.5V25M35 12.5V25" stroke="#54484a" stroke-width="1.2"/></pattern>
</defs><polygon points="1041.0,607.0 1076.0,607.0 1076.0,650.0 1041.0,650.0" fill="url(#brickS)"/><polygon points="1055.0,572.0 1083.0,608.0 1036.0,606.0" fill="#7a5232"/><polygon points="1034.0,604.0 1084.0,606.0 1082.0,610.0 1036.0,609.0" fill="#8a6040"/><polygon points="1077.0,640.0 1095.0,645.0 1170.0,728.0 1168.0,740.0 1152.0,745.0" fill="#70503a"/><rect x="866" y="452" width="126" height="190" fill="url(#towerg)"/><path d="M866 464H992M866 488H992M866 512H992M866 536H992M866 560H992M866 584H992M866 608H992M866 632H992" stroke="#54484a" stroke-width="1.6"/><path d="M912 464V488M955 464V488M890 488V512M940 488V512M925 512V536M965 512V536M900 536V560M945 536V560M915 560V584M960 560V584M895 584V608M940 584V608M920 608V632M965 608V632" stroke="#54484a" stroke-width="1.5"/><path d="M866 452H992V470Q930 465 866 470Z" fill="#505050" opacity="0.4"/><path d="M964 534V488Q964 472 977 472Q990 472 990 488V534Z" fill="#1e1e1e"/><path d="M964 534V488Q964 472 977 472Q990 472 990 488V534" fill="none" stroke="#9a9a9a" stroke-width="2"/><circle cx="887" cy="497" r="21" fill="#6e6c6c" stroke="#4e4c4c" stroke-width="2"/><path d="M887 497L866 497M887 497L872 482M887 497L887 476M887 497L902 482M887 497L872 512M887 497L887 518" stroke="#555" stroke-width="1.5"/><circle cx="887" cy="497" r="13" fill="none" stroke="#555" stroke-width="1.5"/><polygon points="893.0,560.0 1022.0,572.0 1041.0,600.0 1076.0,640.0 1168.0,728.0 1168.0,742.0 1052.0,806.0 1020.0,758.0 989.0,719.0 958.0,690.0 925.0,650.0 906.0,605.0" fill="url(#roofg)"/><line x1="942.0" y1="660.0" x2="1065.0" y2="627.0" stroke="#4e3220" stroke-width="1.5" opacity="0.7"/><line x1="969.0" y1="695.0" x2="1090.0" y2="654.0" stroke="#4e3220" stroke-width="1.5" opacity="0.7"/><line x1="996.0" y1="730.0" x2="1115.0" y2="681.0" stroke="#4e3220" stroke-width="1.5" opacity="0.7"/><line x1="1023.0" y1="765.0" x2="1140.0" y2="708.0" stroke="#4e3220" stroke-width="1.5" opacity="0.7"/><defs><clipPath id="tocc"><path d="M866 555H992V628Q982 640 958 630Q928 610 903 570L866 568Z"/></clipPath></defs><g clip-path="url(#tocc)"><rect x="866" y="452" width="126" height="190" fill="url(#towerg)"/><path d="M866 560H992M866 584H992M866 608H992M866 632H992" stroke="#54484a" stroke-width="1.6"/><path d="M915 560V584M960 560V584M895 584V608M940 584V608M920 608V632M965 608V632" stroke="#54484a" stroke-width="1.5"/></g><rect x="877" y="538" width="28" height="31" rx="10" fill="#9a5e30"/><rect x="992" y="548" width="31" height="27" rx="10" fill="#a06634"/><polygon points="1033.0,797.0 1151.0,752.0 1151.0,830.0 1033.0,940.0" fill="url(#sidew)"/><polygon points="1033.0,865.0 1151.0,790.0 1151.0,830.0 1033.0,940.0" fill="url(#brickS)"/><polygon points="1118.0,772.0 1127.0,770.0 1127.0,880.0 1118.0,884.0" fill="#a06430"/><polygon points="1146.0,750.0 1153.0,748.0 1153.0,830.0 1146.0,835.0" fill="#a06430"/><polygon points="1033.0,938.0 1151.0,828.0 1151.0,834.0 1033.0,946.0" fill="#a06430"/><polygon points="1066.0,792.0 1102.0,782.0 1102.0,848.0 1066.0,860.0" fill="#a86c34"/><polygon points="1071.0,795.0 1097.0,788.0 1097.0,843.0 1071.0,852.0" fill="#2e3424"/><polygon points="1064.0,852.0 1104.0,840.0 1104.0,848.0 1064.0,862.0" fill="#c07a3a"/><polygon points="1129.0,768.0 1141.0,764.0 1141.0,795.0 1129.0,799.0" fill="#2e3424"/><polygon points="761.0,738.0 1026.0,774.0 1026.0,952.0 761.0,889.0" fill="url(#plaster)"/><polygon points="761.0,834.0 851.0,848.0 851.0,908.0 761.0,889.0" fill="url(#brick)"/><polygon points="912.0,862.0 1022.0,880.0 1022.0,952.0 912.0,925.0" fill="url(#brick)"/><polygon points="761.0,886.0 851.0,906.0 851.0,912.0 761.0,893.0" fill="#a06430"/><polygon points="912.0,922.0 1026.0,950.0 1026.0,956.0 912.0,928.0" fill="#a06430"/><polygon points="765.0,740.0 893.0,572.0 906.0,605.0 925.0,650.0 958.0,690.0 989.0,719.0 1005.0,742.0 1010.0,770.0" fill="#948a88"/><polygon points="985.0,712.0 1058.0,808.0 1030.0,812.0 1026.0,790.0 995.0,760.0 985.0,730.0" fill="#958b89"/><polygon points="809.1,678.0 841.1,724.0 846.9,720.0 814.9,674.0" fill="#a86c38"/><polygon points="849.0,666.0 881.0,670.0 881.0,720.0 849.0,716.0" fill="#a86c34"/><polygon points="854.0,672.0 876.0,675.0 876.0,712.0 854.0,710.0" fill="#2a3024"/><polygon points="843.0,652.0 870.0,655.0 872.0,668.0 841.0,665.0" fill="#8a9478"/><polygon points="761.0,719.0 1022.0,768.0 1022.0,786.0 761.0,738.0" fill="#a86c38"/><polygon points="761.0,719.0 1022.0,768.0 1022.0,771.0 761.0,722.0" fill="#c08048"/><polygon points="758.0,736.0 769.0,738.0 769.0,892.0 758.0,890.0" fill="#a86a30"/><polygon points="1012.0,768.0 1034.0,772.0 1034.0,954.0 1012.0,950.0" fill="#b07032"/><polygon points="1012.0,768.0 1018.0,769.0 1018.0,951.0 1012.0,950.0" fill="#c88848"/><polygon points="839.0,764.0 919.0,779.0 919.0,794.0 839.0,780.0" fill="#aa7038"/><polygon points="851.0,781.0 912.0,793.0 912.0,923.0 851.0,909.0" fill="#9a6236"/><path d="M866 784V912M881 787V915M896 790V918" stroke="#7a4a24" stroke-width="1"/><circle cx="882" cy="814" r="6" fill="#3a4a38" stroke="#6a4020" stroke-width="1.5"/><circle cx="858" cy="840" r="2" fill="#aaa"/><polygon points="845.0,908.0 851.0,908.0 912.0,922.0 912.0,930.0 845.0,918.0" fill="#5a5858"/><polygon points="787.0,777.0 836.0,786.0 836.0,846.0 787.0,838.0" fill="#a86c34"/><polygon points="792.0,784.0 831.0,791.0 831.0,838.0 792.0,831.0" fill="#2a3026"/><path d="M811.5 788V835M792 808L831 815" stroke="#b87434" stroke-width="2.5"/><polygon points="782.0,773.0 837.0,782.0 836.0,794.0 783.0,785.0" fill="#8a9478"/><polygon points="785.0,830.0 838.0,840.0 838.0,848.0 785.0,838.0" fill="#aa7038"/><polygon points="924.0,803.0 985.0,815.0 985.0,874.0 924.0,862.0" fill="#a86c34"/><polygon points="930.0,810.0 979.0,820.0 979.0,866.0 930.0,856.0" fill="#2a3026"/><path d="M954.5 814V862M930 832L979 842" stroke="#b87434" stroke-width="2.5"/><polygon points="920.0,795.0 986.0,806.0 985.0,818.0 921.0,807.0" fill="#8a9478"/><polygon points="922.0,857.0 987.0,870.0 987.0,878.0 922.0,865.0" fill="#aa7038"/><polygon points="728.0,748.0 893.0,560.0 904.0,572.0 744.0,760.0 736.0,762.0" fill="#a06834"/><polygon points="728.0,748.0 893.0,560.0 896.0,564.0 732.0,752.0" fill="#b88048"/><polygon points="744.0,748.0 893.0,575.0 900.0,585.0 760.0,752.0" fill="#6a4424"/><polyline points="899.0,560.0 910.0,603.0 930.0,647.0 963.0,686.0 994.0,715.0 1026.0,754.0 1058.0,801.0" fill="none" stroke="#80563a" stroke-width="12" stroke-linejoin="round"/><polyline points="894.0,562.0 905.0,605.0 924.0,650.0 957.0,690.0 988.0,719.0 1019.0,758.0 1051.0,805.0" fill="none" stroke="#a07048" stroke-width="2.2" stroke-linejoin="round"/><polyline points="904.0,558.0 915.0,601.0 935.0,645.0 968.0,684.0 999.0,713.0 1031.0,752.0 1063.0,798.0" fill="none" stroke="#5e3e28" stroke-width="1.2" stroke-linejoin="round"/><polygon points="1050.0,806.0 1168.0,740.0 1168.0,746.0 1055.0,810.0" fill="#5a3a24"/><path d="M922,362 Q929,358 935,362 Q975,410 1014,450 L1012,456 Q927,466 842,456 L841,450 Q885,405 922,362 Z" fill="url(#coneg)"/><path d="M841,450 Q927,440 1014,450 L1013,457 Q927,468 842,457 Z" fill="#7a4e2c"/><path d="M842,457 Q927,468 1013,457" fill="none" stroke="#a07850" stroke-width="2"/><path d="M872 418Q928 410 983 418M888 398Q928 391 966 398M904 380Q928 375 951 380" fill="none" stroke="#5a3620" stroke-width="1" opacity="0.6"/><line x1="927.8" y1="343" x2="927.8" y2="362" stroke="#c8c8c8" stroke-width="1.2"/><path d="M896,331 Q897,318 905,314 Q913,312 917,319 Q926,316 934,309 L941,295 L953,307 L947,311 Q944,328 930,343 L914,342 Q908,337 906,333 Z" fill="#ad9d4a" stroke="#7e7030" stroke-width="1.2"/><polygon points="839.8,490.2 894.8,505.2 899.2,488.8 844.2,473.8" fill="#7a4c2a"/><polygon points="841.6,477.5 896.6,491.5 897.4,488.5 842.4,474.5" fill="#9a6a44"/><polygon points="816.0,437.0 741.0,268.0 793.0,220.0 855.0,419.0" fill="url(#cloth)"/><polygon points="816.0,437.0 741.0,268.0 793.0,220.0 855.0,419.0" fill="none" stroke="#6a6258" stroke-width="1"/><polygon points="838.5,426.9 770.0,242.9 764.0,245.1 832.5,429.1" fill="#5a3818"/><polygon points="837.8,427.1 769.3,243.1 764.7,244.9 833.2,428.9" fill="#ac6e3a"/><polygon points="798.9,397.5 841.2,372.0 837.8,366.5 795.6,392.0" fill="#5a3818"/><polygon points="798.5,396.9 840.8,371.4 838.2,367.1 796.0,392.6" fill="#ac6e3a"/><polygon points="780.4,355.1 825.9,322.1 822.1,316.9 776.6,349.9" fill="#5a3818"/><polygon points="780.0,354.5 825.5,321.5 822.5,317.5 777.0,350.5" fill="#ac6e3a"/><polygon points="761.8,312.7 810.6,272.2 806.4,267.3 757.7,307.8" fill="#5a3818"/><polygon points="761.3,312.2 810.1,271.7 806.9,267.8 758.2,308.3" fill="#ac6e3a"/><polygon points="817.6,440.4 856.6,422.4 853.4,415.6 814.4,433.6" fill="#5a3818"/><polygon points="817.3,439.7 856.3,421.7 853.7,416.3 814.7,434.3" fill="#ac6e3a"/><polygon points="743.9,271.1 795.9,223.1 790.1,216.9 738.1,264.9" fill="#5a3818"/><polygon points="743.4,270.6 795.4,222.6 790.6,217.4 738.6,265.4" fill="#a86c3c"/><polygon points="840.0,477.8 746.0,265.8 736.0,270.2 830.0,482.2" fill="#5a3818"/><polygon points="839.1,478.2 745.1,266.2 736.9,269.8 830.9,481.8" fill="url(#wood)"/><polygon points="835.7,479.7 741.7,267.7 740.3,268.3 834.3,480.3" fill="#c08050"/><polygon points="797.0,513.0 669.0,615.0 650.0,555.0 784.0,477.0" fill="url(#cloth)"/><polygon points="797.0,513.0 669.0,615.0 650.0,555.0 784.0,477.0" fill="none" stroke="#6a6258" stroke-width="1"/><polygon points="788.7,492.3 657.7,582.3 661.3,587.7 792.3,497.7" fill="#5a3818"/><polygon points="789.1,492.9 658.1,582.9 660.9,587.1 791.9,497.1" fill="#ac6e3a"/><polygon points="768.1,537.4 753.6,495.4 747.4,497.6 761.9,539.6" fill="#5a3818"/><polygon points="767.4,537.7 752.9,495.7 748.1,497.3 762.6,539.3" fill="#ac6e3a"/><polygon points="736.1,563.0 720.1,515.0 713.9,517.0 729.9,565.0" fill="#5a3818"/><polygon points="735.4,563.2 719.4,515.2 714.6,516.8 730.6,564.8" fill="#ac6e3a"/><polygon points="704.1,588.5 686.6,534.5 680.4,536.5 697.9,590.5" fill="#5a3818"/><polygon points="703.4,588.7 685.9,534.7 681.1,536.3 698.6,590.3" fill="#ac6e3a"/><polygon points="800.5,511.7 787.5,475.7 780.5,478.3 793.5,514.3" fill="#5a3818"/><polygon points="799.8,512.0 786.8,476.0 781.2,478.0 794.2,514.0" fill="#ac6e3a"/><polygon points="673.1,613.7 654.1,553.7 645.9,556.3 664.9,616.3" fill="#5a3818"/><polygon points="672.3,613.9 653.3,553.9 646.7,556.1 665.7,616.1" fill="#a86c3c"/><polygon points="826.7,487.6 665.7,610.6 672.3,619.4 833.3,496.4" fill="#5a3818"/><polygon points="827.3,488.4 666.3,611.4 671.7,618.6 832.7,495.6" fill="url(#wood)"/><polygon points="829.5,491.4 668.5,614.4 669.5,615.6 830.5,492.6" fill="#c08050"/><polygon points="873.0,458.0 1059.0,310.0 1102.0,386.0 893.0,494.0" fill="url(#cloth)"/><polygon points="873.0,458.0 1059.0,310.0 1102.0,386.0 893.0,494.0" fill="none" stroke="#6a6258" stroke-width="1"/><polygon points="885.0,479.1 1082.5,351.1 1078.5,344.9 881.0,472.9" fill="#5a3818"/><polygon points="884.6,478.5 1082.1,350.5 1078.9,345.5 881.4,473.5" fill="#ac6e3a"/><polygon points="916.2,422.8 942.0,468.8 948.5,465.2 922.8,419.2" fill="#5a3818"/><polygon points="916.9,422.5 942.6,468.5 947.9,465.5 922.1,419.5" fill="#ac6e3a"/><polygon points="962.7,385.8 994.2,441.8 1000.8,438.2 969.3,382.2" fill="#5a3818"/><polygon points="963.4,385.5 994.9,441.5 1000.1,438.5 968.6,382.5" fill="#ac6e3a"/><polygon points="1009.2,348.8 1046.5,414.8 1053.0,411.2 1015.8,345.2" fill="#5a3818"/><polygon points="1009.9,348.5 1047.1,414.5 1052.4,411.5 1015.1,345.5" fill="#ac6e3a"/><polygon points="869.3,460.1 889.3,496.1 896.7,491.9 876.7,455.9" fill="#5a3818"/><polygon points="869.9,459.7 889.9,495.7 896.1,492.3 876.1,456.3" fill="#ac6e3a"/><polygon points="1054.9,312.3 1097.9,388.3 1106.1,383.7 1063.1,307.7" fill="#5a3818"/><polygon points="1055.5,312.0 1098.5,388.0 1105.5,384.0 1062.5,308.0" fill="#a86c3c"/><polygon points="845.7,482.7 1062.7,314.7 1055.3,305.3 838.3,473.3" fill="#5a3818"/><polygon points="845.1,482.0 1062.1,314.0 1055.9,306.0 838.9,474.0" fill="url(#wood)"/><polygon points="842.5,478.6 1059.5,310.6 1058.5,309.4 841.5,477.4" fill="#c08050"/><polygon points="862.0,533.0 960.0,746.0 898.0,773.0 833.0,551.0" fill="url(#cloth)"/><polygon points="862.0,533.0 960.0,746.0 898.0,773.0 833.0,551.0" fill="none" stroke="#6a6258" stroke-width="1"/><polygon points="844.0,543.3 925.5,760.8 932.5,758.2 851.0,540.7" fill="#5a3818"/><polygon points="844.7,543.1 926.2,760.6 931.8,758.4 850.3,540.9" fill="#ac6e3a"/><polygon points="884.7,583.0 847.5,603.2 851.0,609.8 888.3,589.5" fill="#5a3818"/><polygon points="885.1,583.6 847.8,603.9 850.7,609.1 887.9,588.9" fill="#ac6e3a"/><polygon points="909.3,636.1 863.8,658.6 867.2,665.4 912.7,642.9" fill="#5a3818"/><polygon points="909.7,636.8 864.2,659.3 866.8,664.7 912.3,642.2" fill="#ac6e3a"/><polygon points="933.9,689.3 880.2,714.1 883.3,720.9 937.1,696.2" fill="#5a3818"/><polygon points="934.2,690.0 880.5,714.8 883.0,720.2 936.8,695.5" fill="#ac6e3a"/><polygon points="859.8,529.4 830.8,547.4 835.2,554.6 864.2,536.6" fill="#5a3818"/><polygon points="860.2,530.0 831.2,548.0 834.8,554.0 863.8,536.0" fill="#ac6e3a"/><polygon points="958.1,741.6 896.1,768.6 899.9,777.4 961.9,750.4" fill="#5a3818"/><polygon points="958.4,742.3 896.4,769.3 899.6,776.7 961.6,749.7" fill="#a86c3c"/><polygon points="840.5,494.5 954.5,748.5 965.5,743.5 851.5,489.5" fill="#5a3818"/><polygon points="841.4,494.0 955.4,748.0 964.6,744.0 850.6,490.0" fill="url(#wood)"/><polygon points="845.3,492.3 959.3,746.3 960.7,745.7 846.7,491.7" fill="#c08050"/><polygon points="804.0,480.0 826.0,461.0 849.0,492.0 817.0,511.0" fill="#b8802e"/><polygon points="826.0,461.0 849.0,492.0 847.0,496.0 824.0,465.0" fill="#7a4c20"/><polygon points="849.0,492.0 817.0,511.0 816.0,507.0 846.0,489.0" fill="#7a4c20"/><ellipse cx="822.5" cy="485" rx="7" ry="9.5" fill="#7a7e7a" stroke="#d8d8d8" stroke-width="1.2"/><ellipse cx="821" cy="482" rx="3" ry="4" fill="#9aa09a"/></svg>
<div class="a" style="left:5px;top:1039px;width:1910px;height:36px;background:#6a6a6a"></div>
<div class="t" style="left:7px;top:1047px;line-height:18px;font-size:14px;letter-spacing:0.28px;color:#f4f4f4">Manage all materials used in the game, including 3D models, textures, sprites, images, and sounds. 3D stamps and 2D stamps are also created here.</div>
<div class="a" style="left:1712px;top:1045px;width:92px;height:24px;background:#b8b8b8;border-radius:3px"></div>
<svg class="a" style="left:1717px;top:1048px" width="18" height="18"><rect width="18" height="18" rx="2" fill="#5a8ee0"/><path d="M3.5 9L7.5 13L14.5 4.5" fill="none" stroke="#fff" stroke-width="2"/></svg>
<div class="t" style="left:1742px;top:1048px;line-height:18px;font-size:13.5px;color:#111">OK</div>
<div class="a" style="left:1808px;top:1045px;width:101px;height:24px;background:#b8b8b8;border-radius:3px"></div>
<svg class="a" style="left:1813px;top:1048px" width="18" height="18"><rect width="18" height="18" rx="2" fill="#e06088"/><path d="M4 4L14 14M14 4L4 14" fill="none" stroke="#fff" stroke-width="2"/></svg>
<div class="t" style="left:1838px;top:1048px;line-height:18px;font-size:13.5px;color:#111">Cancel</div>
<div class="hdr" style="left:1473px;top:34px;width:442px;height:21px">Material Settings</div>
<div class="a" style="left:1473px;top:55px;width:442px;height:23px;background:#c08b00"></div>
<div class="t" style="left:1479px;top:57px;line-height:18px;font-size:14px;color:#fbf6e4">Name</div>
<div class="a" style="left:1473px;top:78px;width:442px;height:24px;background:#f5efd4;border:1px solid #a0a0a0"></div>
<div class="t" style="left:1477px;top:82px;line-height:18px;font-size:14.2px;letter-spacing:0.2px;color:#111">sb_obj_outdoor006_Windmill01_l(sb_obj_outdoor006_Windmill0..</div>
<svg class="a" style="left:1897px;top:82px" width="16" height="16"><path d="M2 15L3 10.5L11 2.5L15 6.5L7 14.5Z" fill="#9a9a9a"/><path d="M2 15L3 10.5L6.5 14Z" fill="#c8c8c8"/><path d="M9.5 4L13.5 8" stroke="#f5efd4" stroke-width="1"/></svg>
<div class="a" style="left:1473px;top:102px;width:442px;height:36px;background:linear-gradient(#fbfbfb,#f3f3f3)"></div>
<div class="a" style="left:1914px;top:124px;width:1px;height:12px;background:#aaa"></div>
<div class="a" style="left:1475px;top:108px;width:24px;height:25px;background:#f7f7f7;border:1px solid #e2e2e2;border-radius:4px"></div>
<div class="a" style="left:1504px;top:108px;width:24px;height:25px;background:#f7f7f7;border:1px solid #e2e2e2;border-radius:4px"></div>
<svg class="a" style="left:1476px;top:110px" width="22" height="21"><path d="M8 3H14L17 6V13H8Z" fill="none" stroke="#444" stroke-width="2"/><path d="M4 8H11L13 10V18H4Z" fill="#fff" stroke="#444" stroke-width="2"/><path d="M6 13H11M6 15.5H11" stroke="#444" stroke-width="1.2"/></svg>
<svg class="a" style="left:1505px;top:110px" width="22" height="21"><rect x="4" y="5" width="14" height="13" fill="none" stroke="#d0d0d0" stroke-width="2"/><rect x="7" y="3" width="8" height="4" fill="#d0d0d0"/><rect x="6" y="8" width="10" height="8" fill="#e0e0e0"/></svg>
<div class="a" style="left:1473px;top:138px;width:442px;height:897px;overflow:hidden;background:#f0f0f0">
<div class="a" style="left:433px;top:17px;width:2px;height:852px;background:#8a8a8a"></div>
<div class="a" style="left:0px;top:0px;width:425px;height:35px;background:#f5efd4;border:1px solid #a0a0a0"></div>
<div class="a" style="left:3px;top:3px;width:419px;height:29px;background:#c08b00"></div>
<svg class="a" style="left:7px;top:11px" width="12" height="12"><circle cx="6" cy="6" r="6" fill="#fff"/><path d="M5 3.5L7.5 6L5 8.5" fill="none" stroke="#c08b00" stroke-width="2"/></svg>
<div class="t" style="left:24px;top:9px;line-height:18px;font-size:14px;color:#111;color:#fbf6e4;font-size:13.8px">Basic(Back Face Culling, ON, OFF, OFF, OFF, 0, 0, 1, 1)</div>
<div class="a" style="left:0px;top:34px;width:425px;height:35px;background:#f5efd4;border:1px solid #a0a0a0"></div>
<div class="a" style="left:3px;top:37px;width:419px;height:29px;background:#c08b00"></div>
<svg class="a" style="left:7px;top:45px" width="12" height="12"><circle cx="6" cy="6" r="6" fill="#fff"/><path d="M5 3.5L7.5 6L5 8.5" fill="none" stroke="#c08b00" stroke-width="2"/></svg>
<div class="t" style="left:24px;top:43px;line-height:18px;font-size:14px;color:#111;color:#fbf6e4;font-size:13.8px">Animation(OFF, OFF, OFF, OFF)</div>
<div class="a" style="left:0px;top:68px;width:425px;height:35px;background:#f5efd4;border:1px solid #a0a0a0"></div>
<div class="a" style="left:3px;top:71px;width:419px;height:29px;background:#c08b00"></div>
<svg class="a" style="left:7px;top:79px" width="12" height="12"><circle cx="6" cy="6" r="6" fill="#fff"/><path d="M3.5 5L6 7.5L8.5 5" fill="none" stroke="#c08b00" stroke-width="2"/></svg>
<div class="t" style="left:24px;top:77px;line-height:18px;font-size:14px;color:#111;color:#fbf6e4;font-size:13.8px">Outlines</div>
<div class="a" style="left:0px;top:102px;width:425px;height:24px;background:#f5efd4;border:1px solid #a0a0a0"></div>
<div class="a" style="left:0px;top:102px;width:190px;height:24px;background:#f5efd4;border:1px solid #a0a0a0"></div>
<div class="t" style="left:4px;top:106px;line-height:18px;font-size:14px;color:#111;">Use Outlines</div>
<svg class="a" style="left:194px;top:106px" width="33" height="17"><rect x="0.5" y="0.5" width="32" height="15" rx="7.5" fill="#6e6e6e"/><circle cx="8" cy="8" r="6.3" fill="#d0d0d0"/></svg>
<div class="a" style="left:0px;top:125px;width:425px;height:24px;background:#f5efd4;border:1px solid #a0a0a0"></div>
<div class="a" style="left:0px;top:125px;width:190px;height:24px;background:#f5efd4;border:1px solid #a0a0a0"></div>
<div class="t" style="left:4px;top:129px;line-height:18px;font-size:14px;color:#111;">Outline Thickness</div>
<div class="t" style="left:193px;top:129px;line-height:18px;font-size:14px;color:#111;">1</div>
<svg class="a" style="left:407px;top:129px" width="15" height="15"><circle cx="7.5" cy="7.5" r="7" fill="#a3a3a3"/><path d="M4.5 6.5L7.5 3.5L10.5 6.5Z M4.5 8.5L7.5 11.5L10.5 8.5Z" fill="#f5efd4"/></svg>
<div class="a" style="left:0px;top:148px;width:425px;height:24px;background:#f5efd4;border:1px solid #a0a0a0"></div>
<div class="a" style="left:0px;top:148px;width:190px;height:24px;background:#f5efd4;border:1px solid #a0a0a0"></div>
<div class="t" style="left:4px;top:152px;line-height:18px;font-size:14px;color:#111;">Outline Color</div>
<div class="a" style="left:190px;top:149px;width:234px;height:22px;background:#000"></div>
<div class="t" style="left:193px;top:152px;line-height:18px;font-size:14px;color:#111;color:#fff">000000FF</div>
<svg class="a" style="left:408px;top:153px" width="14" height="13"><path d="M1 6.5H12M7 1.5L12 6.5L7 11.5" fill="none" stroke="#a0a0a0" stroke-width="1.6"/></svg>
<div class="a" style="left:0px;top:171px;width:425px;height:35px;background:#f5efd4;border:1px solid #a0a0a0"></div>
<div class="a" style="left:3px;top:174px;width:419px;height:29px;background:#c08b00"></div>
<svg class="a" style="left:7px;top:182px" width="12" height="12"><circle cx="6" cy="6" r="6" fill="#fff"/><path d="M3.5 5L6 7.5L8.5 5" fill="none" stroke="#c08b00" stroke-width="2"/></svg>
<div class="t" style="left:24px;top:180px;line-height:18px;font-size:14px;color:#111;color:#fbf6e4;font-size:13.8px">Shader</div>
<div class="a" style="left:0px;top:206px;width:425px;height:24px;background:#f5efd4;border:1px solid #a0a0a0"></div>
<div class="a" style="left:0px;top:206px;width:129px;height:24px;background:#f5efd4;border:1px solid #a0a0a0"></div>
<div class="t" style="left:4px;top:210px;line-height:18px;font-size:14px;color:#111;">Shader</div>
<div class="t" style="left:132px;top:210px;line-height:18px;font-size:14px;color:#111;">a_n_rm</div>
<svg class="a" style="left:408px;top:211px" width="15" height="14"><rect x="0" y="0" width="14" height="14" rx="2" fill="#a3a3a3"/><path d="M2 3H12L7 8Z" fill="#f5efd4"/></svg>
<div class="a" style="left:0px;top:229px;width:425px;height:70px;background:#f0f0f0;border:1px solid #6e6e6e"></div>
<div class="t" style="left:5px;top:232px;line-height:18px;font-size:14px;color:#111;font-size:13px;line-height:16px;letter-spacing:0.15px">It is rendered as opaque.</div>
<div class="t" style="left:5px;top:247px;line-height:18px;font-size:14px;color:#111;font-size:13px;line-height:16px;letter-spacing:0.15px">Physics-Based Shading: Albedo &lt;Color&gt;, Normal &lt;Normal&gt;, Mask</div>
<div class="t" style="left:5px;top:262px;line-height:18px;font-size:14px;color:#111;font-size:13px;line-height:16px;letter-spacing:0.15px">&lt;Roughness (Green), Metallic (Blue), Emissive (Red), Specular</div>
<div class="t" style="left:5px;top:277px;line-height:18px;font-size:14px;color:#111;font-size:13px;line-height:16px;letter-spacing:0.15px">(Alpha)&gt;</div>
<div class="a" style="left:0px;top:299px;width:425px;height:22px;background:#e6e6e6;border:1px solid #a0a0a0"></div>
<div class="a" style="left:0px;top:299px;width:101px;height:22px;background:#a8a8a8;border:1px solid #a0a0a0"></div>
<div class="t" style="left:4px;top:302px;line-height:18px;font-size:14px;color:#111;color:#fff">Texture Name</div>
<div class="t" style="left:104px;top:302px;line-height:18px;font-size:14px;color:#111;color:#a0a0a0;letter-spacing:0.15px">sb_obj_outdoor006_Windmill01_l_albedo</div>
<div class="a" style="left:0px;top:320px;width:425px;height:134px;background:#f5efd4;border:1px solid #a0a0a0"></div>
<div class="a" style="left:0px;top:320px;width:101px;height:134px;background:#f5efd4;border:1px solid #a0a0a0"></div>
<div class="t" style="left:4px;top:379px;line-height:18px;font-size:14px;color:#111;">Albedo_Map</div>
<svg class="a" style="left:102px;top:323px" width="127" height="127" viewBox="0 0 128 128"><rect x="0" y="0" width="128" height="128" fill="#cc8418"/><rect x="0" y="0" width="46" height="6" fill="#8a8088"/><rect x="2" y="6" width="6" height="20" fill="#d89028"/><rect x="10" y="6" width="6" height="18" fill="#c07818"/><rect x="17" y="6" width="4" height="10" fill="#a09890"/><rect x="0" y="18" width="17" height="14" fill="#8a7470"/><path d="M0 18L17 32H0Z" fill="#a87050"/><rect x="22" y="6" width="22" height="8" fill="#b8b0b8"/><ellipse cx="34" cy="26" rx="12" ry="11" fill="#e09a28"/><ellipse cx="34" cy="26" rx="7" ry="6" fill="none" stroke="#c07818" stroke-width="2"/><rect x="45" y="3" width="18" height="25" fill="#c07010"/><circle cx="51" cy="16" r="7" fill="#b06a10" stroke="#6a4010" stroke-width="2"/><circle cx="51" cy="16" r="2.5" fill="#c0c0c0"/><rect x="62" y="6" width="18" height="12" fill="#8a8890"/><rect x="63" y="20" width="16" height="20" fill="#9a5810"/><rect x="5" y="36" width="9" height="22" fill="#7a7a80"/><rect x="14" y="38" width="8" height="14" fill="#d89028"/><circle cx="17" cy="49" r="2.5" fill="#303030"/><rect x="6" y="54" width="7" height="6" fill="#1e1e22"/><rect x="15" y="55" width="7" height="5" fill="#1e1e22"/><rect x="22" y="35" width="23" height="30" fill="#c88020"/><rect x="24" y="36" width="1.5" height="28" fill="#8a8890"/><rect x="28" y="36" width="1.5" height="28" fill="#8a8890"/><rect x="32" y="36" width="1.5" height="28" fill="#8a8890"/><rect x="36" y="36" width="1.5" height="28" fill="#8a8890"/><rect x="40" y="36" width="1.5" height="28" fill="#8a8890"/><rect x="0" y="62" width="45" height="43" fill="#a85c10"/><rect x="22" y="62" width="1.5" height="43" fill="#804000"/><rect x="0" y="82" width="45" height="1.5" fill="#804000"/><ellipse cx="11" cy="75" rx="7" ry="2" fill="#c08030"/><ellipse cx="32" cy="75" rx="7" ry="2" fill="#c08030"/><rect x="0" y="105" width="45" height="23" fill="#c07010"/><ellipse cx="22" cy="116" rx="8" ry="6" fill="#8a4a08"/><rect x="45" y="40" width="35" height="35" fill="#e09a28"/><path d="M48 55L62 42L78 56L62 70Z" fill="#c87818"/><path d="M52 55L62 46L74 56L62 66Z" fill="#e8a030"/><rect x="45" y="75" width="18" height="30" fill="#a86010"/><rect x="63" y="70" width="17" height="38" fill="#8a8088"/><rect x="66" y="74" width="10" height="30" fill="#9a9098"/><rect x="46" y="105" width="34" height="20" fill="#b0a8aa"/><rect x="48" y="108" width="14" height="14" fill="#a8a0a0"/><rect x="80" y="0" width="25" height="25" fill="#d08820"/><rect x="85" y="4" width="4" height="16" fill="#a0a090"/><rect x="105" y="4" width="23" height="21" fill="#c8c0b0"/><rect x="107" y="8" width="18" height="14" fill="#d8d0c0"/><path d="M104 25H128V40L118 35L108 38Z" fill="#e8d050"/><path d="M75 44L90 36L100 42L112 36L128 40V128H104L100 85L85 82L80 60Z" fill="#a89494"/><path d="M80 44L92 40L100 52L92 60L82 56Z" fill="#c8b8b0"/><path d="M100 44L112 40L122 52L110 56Z" fill="#d0c4bc"/><rect x="104" y="56" width="24" height="72" fill="#d8ccc8"/><rect x="104" y="60" width="24" height="3.5" fill="#8a8088"/><rect x="104" y="69" width="24" height="3.5" fill="#8a8088"/><rect x="104" y="78" width="24" height="3.5" fill="#8a8088"/><rect x="104" y="87" width="24" height="3.5" fill="#8a8088"/><rect x="104" y="96" width="24" height="3.5" fill="#8a8088"/><rect x="104" y="105" width="24" height="3.5" fill="#8a8088"/><rect x="104" y="114" width="24" height="3.5" fill="#8a8088"/><rect x="80" y="85" width="22" height="25" fill="#c87818"/><rect x="66" y="50" width="3" height="3" fill="#202020"/></svg>
<svg class="a" style="left:395px;top:406px" width="28" height="28" viewBox="0 0 28 28"><rect width="28" height="28" rx="2" fill="#fff"/><path d="M10 1.5L23 7.5L18 19M11.5 24L1.5 19L10 1.5" fill="none" stroke="#555" stroke-width="1.6"/><path d="M8 19Q8 9 14 8Q19 8 18 14M11 18Q11 11 14 11Q16 12 15 15" fill="none" stroke="#555" stroke-width="1"/><path d="M25 14V21Q25 23 23 23H15" fill="none" stroke="#555" stroke-width="2.4"/><path d="M13 23L17 19.5V26.5Z" fill="#555"/></svg>
<svg class="a" style="left:408px;top:438px" width="14" height="13"><path d="M1 6.5H12M7 1.5L12 6.5L7 11.5" fill="none" stroke="#a0a0a0" stroke-width="1.6"/></svg>
<div class="a" style="left:0px;top:453px;width:425px;height:22px;background:#e6e6e6;border:1px solid #a0a0a0"></div>
<div class="a" style="left:0px;top:453px;width:101px;height:22px;background:#e6e6e6;border:1px solid #a0a0a0"></div>
<div class="t" style="left:4px;top:456px;line-height:18px;font-size:14px;color:#111;color:#a0a0a0">Texture Name</div>
<div class="t" style="left:104px;top:456px;line-height:18px;font-size:14px;color:#111;color:#a0a0a0;letter-spacing:0.15px">sb_obj_outdoor006_Windmill01_l_normal</div>
<div class="a" style="left:0px;top:474px;width:425px;height:134px;background:#f5efd4;border:1px solid #a0a0a0"></div>
<div class="a" style="left:0px;top:474px;width:101px;height:134px;background:#f5efd4;border:1px solid #a0a0a0"></div>
<div class="t" style="left:4px;top:533px;line-height:18px;font-size:14px;color:#111;">Normal_Map</div>
<svg class="a" style="left:102px;top:477px" width="127" height="127" viewBox="0 0 128 128"><rect x="0" y="0" width="128" height="128" fill="#8282f6"/><rect x="0" y="62" width="46" height="66" fill="#7e80f2"/><rect x="47" y="110" width="34" height="18" fill="#8484f8"/><rect x="4" y="2" width="1" height="60" fill="#7a7ae8"/><rect x="14" y="2" width="1" height="60" fill="#7a7ae8"/><rect x="24" y="2" width="1" height="60" fill="#7a7ae8"/><rect x="34" y="2" width="1" height="60" fill="#7a7ae8"/><rect x="44" y="2" width="1" height="60" fill="#7a7ae8"/><rect x="54" y="2" width="1" height="60" fill="#7a7ae8"/><rect x="64" y="2" width="1" height="60" fill="#7a7ae8"/><rect x="74" y="2" width="1" height="60" fill="#7a7ae8"/><rect x="84" y="2" width="1" height="60" fill="#7a7ae8"/><rect x="94" y="2" width="1" height="60" fill="#7a7ae8"/><rect x="104" y="2" width="1" height="60" fill="#7a7ae8"/><rect x="114" y="2" width="1" height="60" fill="#7a7ae8"/><path d="M24 30Q42 20 36 30Q30 45 22 50" fill="none" stroke="#f0e080" stroke-width="2"/><path d="M23 31Q38 25 34 32" fill="none" stroke="#602080" stroke-width="1.5"/><path d="M49 12Q44 20 50 26" fill="none" stroke="#f0e080" stroke-width="2"/><path d="M50 10Q56 16 50 24" fill="none" stroke="#e06080" stroke-width="1"/><path d="M48 65Q50 72 56 75" fill="none" stroke="#f06080" stroke-width="3"/><path d="M70 6L76 6L70 14Z" fill="#802080"/><path d="M68 12L72 12L70 16Z" fill="#20a080"/><rect x="2" y="5" width="5" height="2" fill="#c04080"/><rect x="80" y="30" width="2" height="8" fill="#f08080"/><rect x="108" y="62" width="5" height="5" fill="#e080c0"/><rect x="108" y="80" width="2" height="12" fill="#f08080"/><rect x="85" y="82" width="3" height="10" fill="#f08080"/><rect x="47" y="108" width="12" height="3" fill="#60f080"/><rect x="2" y="56" width="8" height="1" fill="#60f0a0"/><circle cx="66" cy="71" r="2.5" fill="#c040a0"/><circle cx="66" cy="87" r="2" fill="#40c0a0"/><circle cx="66" cy="96" r="2.5" fill="#f080c0"/></svg>
<svg class="a" style="left:395px;top:560px" width="28" height="28" viewBox="0 0 28 28"><rect width="28" height="28" rx="2" fill="#fff"/><path d="M10 1.5L23 7.5L18 19M11.5 24L1.5 19L10 1.5" fill="none" stroke="#555" stroke-width="1.6"/><path d="M8 19Q8 9 14 8Q19 8 18 14M11 18Q11 11 14 11Q16 12 15 15" fill="none" stroke="#555" stroke-width="1"/><path d="M25 14V21Q25 23 23 23H15" fill="none" stroke="#555" stroke-width="2.4"/><path d="M13 23L17 19.5V26.5Z" fill="#555"/></svg>
<svg class="a" style="left:408px;top:592px" width="14" height="13"><path d="M1 6.5H12M7 1.5L12 6.5L7 11.5" fill="none" stroke="#a0a0a0" stroke-width="1.6"/></svg>
<div class="a" style="left:0px;top:607px;width:425px;height:22px;background:#e6e6e6;border:1px solid #a0a0a0"></div>
<div class="a" style="left:0px;top:607px;width:101px;height:22px;background:#e6e6e6;border:1px solid #a0a0a0"></div>
<div class="t" style="left:4px;top:610px;line-height:18px;font-size:14px;color:#111;color:#a0a0a0">Texture Name</div>
<div class="t" style="left:104px;top:610px;line-height:18px;font-size:14px;color:#111;color:#a0a0a0;letter-spacing:0.15px">sb_obj_outdoor006_Windmill01_l_mask</div>
<div class="a" style="left:0px;top:628px;width:425px;height:134px;background:#f5efd4;border:1px solid #a0a0a0"></div>
<div class="a" style="left:0px;top:628px;width:101px;height:134px;background:#f5efd4;border:1px solid #a0a0a0"></div>
<div class="t" style="left:4px;top:687px;line-height:18px;font-size:14px;color:#111;">Mask_Map</div>
<svg class="a" style="left:102px;top:631px" width="127" height="127" viewBox="0 0 128 128"><rect x="0" y="0" width="128" height="128" fill="#14b014"/><rect x="0" y="0" width="44" height="5" fill="#000090"/><rect x="14" y="0" width="4" height="5" fill="#14b014"/><rect x="24" y="0" width="4" height="8" fill="#14b014"/><path d="M50 8L54 0H58L62 8Z" fill="#000090"/><path d="M66 12L70 9L76 11L76 18H66Z" fill="#000090"/><rect x="0" y="62" width="46" height="66" fill="#12a412"/><rect x="0" y="64" width="46" height="1" fill="#109810"/><rect x="0" y="70" width="46" height="1" fill="#109810"/><rect x="0" y="76" width="46" height="1" fill="#109810"/><rect x="0" y="82" width="46" height="1" fill="#109810"/><rect x="0" y="88" width="46" height="1" fill="#109810"/><rect x="0" y="94" width="46" height="1" fill="#109810"/><rect x="0" y="100" width="46" height="1" fill="#109810"/><rect x="0" y="106" width="46" height="1" fill="#109810"/><rect x="0" y="112" width="46" height="1" fill="#109810"/><rect x="0" y="118" width="46" height="1" fill="#109810"/><rect x="5" y="36" width="9" height="22" fill="#0e8a0e"/><rect x="6" y="56" width="7" height="5" fill="#20e020"/><rect x="15" y="57" width="6" height="4" fill="#20e020"/><circle cx="17" cy="48" r="2" fill="#60e0a0"/><rect x="0" y="8" width="20" height="2" fill="#0a7a0a"/><rect x="0" y="30" width="20" height="1.5" fill="#0a7a0a"/><circle cx="34" cy="26" r="10" fill="none" stroke="#0c900c" stroke-width="1"/><circle cx="51" cy="16" r="5" fill="none" stroke="#0a7a0a" stroke-width="1.5"/><circle cx="51" cy="16" r="1.5" fill="#3080ff"/><rect x="103" y="0" width="25" height="25" fill="#20d020"/><rect x="105" y="24" width="23" height="14" fill="#004800"/><ellipse cx="124" cy="42" rx="6" ry="7" fill="#0060ff"/><path d="M72 48Q80 34 92 38Q102 36 112 40L124 48V82H72Z" fill="#20d420"/><circle cx="85" cy="42" r="2" fill="#084008"/><circle cx="83" cy="48" r="1.5" fill="#60f0c0"/><rect x="63" y="68" width="27" height="40" fill="#18d818"/><circle cx="68" cy="77" r="2.5" fill="#0a5a0a"/><circle cx="67" cy="86" r="1.5" fill="#0a5a0a"/><circle cx="68" cy="95" r="2" fill="#0a5a0a"/><rect x="80" y="80" width="24" height="30" fill="#12a812"/><rect x="104" y="60" width="24" height="20" fill="#1ec41e"/><rect x="104" y="82" width="24" height="46" fill="#18cc18"/><rect x="46" y="110" width="28" height="15" fill="#004800"/><rect x="60" y="108" width="14" height="3" fill="#1ec41e"/><rect x="32" y="50" width="2" height="30" fill="#0a6a0a"/><rect x="44" y="50" width="2" height="30" fill="#0a6a0a"/><rect x="26" y="40" width="2" height="25" fill="#0a7a0a"/></svg>
<svg class="a" style="left:395px;top:714px" width="28" height="28" viewBox="0 0 28 28"><rect width="28" height="28" rx="2" fill="#fff"/><path d="M10 1.5L23 7.5L18 19M11.5 24L1.5 19L10 1.5" fill="none" stroke="#555" stroke-width="1.6"/><path d="M8 19Q8 9 14 8Q19 8 18 14M11 18Q11 11 14 11Q16 12 15 15" fill="none" stroke="#555" stroke-width="1"/><path d="M25 14V21Q25 23 23 23H15" fill="none" stroke="#555" stroke-width="2.4"/><path d="M13 23L17 19.5V26.5Z" fill="#555"/></svg>
<svg class="a" style="left:408px;top:746px" width="14" height="13"><path d="M1 6.5H12M7 1.5L12 6.5L7 11.5" fill="none" stroke="#a0a0a0" stroke-width="1.6"/></svg>
<div class="a" style="left:0px;top:761px;width:425px;height:22px;background:#fff;border:1px solid #a0a0a0"></div>
<div class="a" style="left:0px;top:761px;width:101px;height:22px;background:#f5efd4;border:1px solid #a0a0a0"></div>
<div class="t" style="left:4px;top:764px;line-height:18px;font-size:14px;color:#111;">Albedo_Color</div>
<div class="t" style="left:104px;top:764px;line-height:18px;font-size:14px;color:#111;">FFFFFF</div>
<svg class="a" style="left:408px;top:765px" width="14" height="13"><path d="M1 6.5H12M7 1.5L12 6.5L7 11.5" fill="none" stroke="#a0a0a0" stroke-width="1.6"/></svg>
<div class="a" style="left:0px;top:782px;width:425px;height:22px;background:#f5efd4;border:1px solid #a0a0a0"></div>
<div class="a" style="left:0px;top:782px;width:101px;height:22px;background:#f5efd4;border:1px solid #a0a0a0"></div>
<div class="t" style="left:4px;top:785px;line-height:18px;font-size:14px;color:#111;">Normal_Scale</div>
<div class="t" style="left:104px;top:785px;line-height:18px;font-size:14px;color:#111;">1</div>
<svg class="a" style="left:407px;top:785px" width="15" height="15"><circle cx="7.5" cy="7.5" r="7" fill="#a3a3a3"/><path d="M4.5 6.5L7.5 3.5L10.5 6.5Z M4.5 8.5L7.5 11.5L10.5 8.5Z" fill="#f5efd4"/></svg>
<div class="a" style="left:0px;top:803px;width:425px;height:22px;background:#f5efd4;border:1px solid #a0a0a0"></div>
<div class="a" style="left:0px;top:803px;width:101px;height:22px;background:#f5efd4;border:1px solid #a0a0a0"></div>
<div class="t" style="left:4px;top:806px;line-height:18px;font-size:14px;color:#111;">Roughness</div>
<div class="t" style="left:104px;top:806px;line-height:18px;font-size:14px;color:#111;">1</div>
<svg class="a" style="left:407px;top:806px" width="15" height="15"><circle cx="7.5" cy="7.5" r="7" fill="#a3a3a3"/><path d="M4.5 6.5L7.5 3.5L10.5 6.5Z M4.5 8.5L7.5 11.5L10.5 8.5Z" fill="#f5efd4"/></svg>
<div class="a" style="left:0px;top:824px;width:425px;height:22px;background:#f5efd4;border:1px solid #a0a0a0"></div>
<div class="a" style="left:0px;top:824px;width:101px;height:22px;background:#f5efd4;border:1px solid #a0a0a0"></div>
<div class="t" style="left:4px;top:827px;line-height:18px;font-size:14px;color:#111;">Metallic</div>
<div class="t" style="left:104px;top:827px;line-height:18px;font-size:14px;color:#111;">1</div>
<svg class="a" style="left:407px;top:827px" width="15" height="15"><circle cx="7.5" cy="7.5" r="7" fill="#a3a3a3"/><path d="M4.5 6.5L7.5 3.5L10.5 6.5Z M4.5 8.5L7.5 11.5L10.5 8.5Z" fill="#f5efd4"/></svg>
<div class="a" style="left:0px;top:845px;width:425px;height:22px;background:#f5efd4;border:1px solid #a0a0a0"></div>
<div class="a" style="left:0px;top:845px;width:101px;height:22px;background:#f5efd4;border:1px solid #a0a0a0"></div>
<div class="t" style="left:4px;top:848px;line-height:18px;font-size:14px;color:#111;">Specular</div>
<div class="t" style="left:104px;top:848px;line-height:18px;font-size:14px;color:#111;">1</div>
<svg class="a" style="left:407px;top:848px" width="15" height="15"><circle cx="7.5" cy="7.5" r="7" fill="#a3a3a3"/><path d="M4.5 6.5L7.5 3.5L10.5 6.5Z M4.5 8.5L7.5 11.5L10.5 8.5Z" fill="#f5efd4"/></svg>
<div class="a" style="left:0px;top:866px;width:425px;height:22px;background:#fff;border:1px solid #a0a0a0"></div>
<div class="a" style="left:0px;top:866px;width:101px;height:22px;background:#f5efd4;border:1px solid #a0a0a0"></div>
<div class="t" style="left:4px;top:869px;line-height:18px;font-size:14px;color:#111;">Emissive_C...</div>
<div class="t" style="left:104px;top:869px;line-height:18px;font-size:14px;color:#111;">FFFFFF</div>
<svg class="a" style="left:408px;top:870px" width="14" height="13"><path d="M1 6.5H12M7 1.5L12 6.5L7 11.5" fill="none" stroke="#a0a0a0" stroke-width="1.6"/></svg>
<div class="a" style="left:0px;top:887px;width:425px;height:22px;background:#f5efd4;border:1px solid #a0a0a0"></div>
<div class="a" style="left:0px;top:887px;width:101px;height:22px;background:#f5efd4;border:1px solid #a0a0a0"></div>
<div class="t" style="left:4px;top:890px;line-height:18px;font-size:14px;color:#111;">Emissive_Sc...</div>
<div class="t" style="left:104px;top:890px;line-height:18px;font-size:14px;color:#111;">5</div>
<svg class="a" style="left:407px;top:890px" width="15" height="15"><circle cx="7.5" cy="7.5" r="7" fill="#a3a3a3"/><path d="M4.5 6.5L7.5 3.5L10.5 6.5Z M4.5 8.5L7.5 11.5L10.5 8.5Z" fill="#f5efd4"/></svg>
</div>
</body></html>
